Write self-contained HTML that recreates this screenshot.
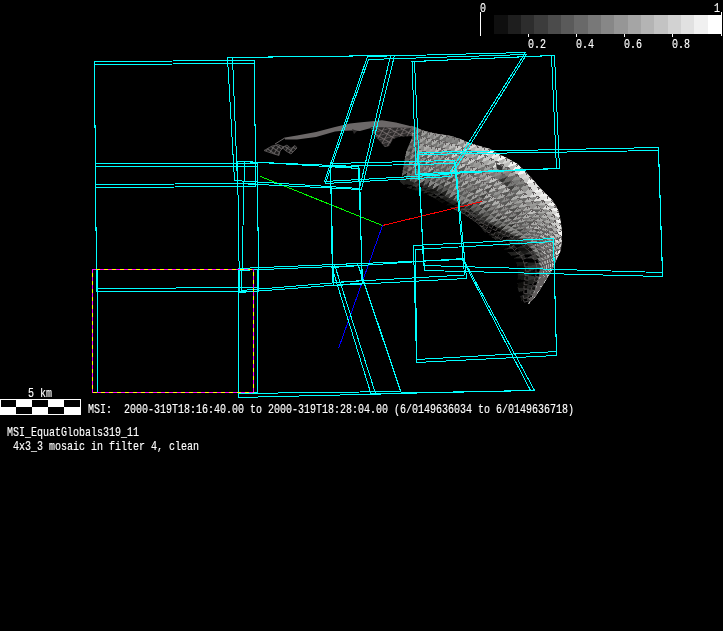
<!DOCTYPE html>
<html><head><meta charset="utf-8"><title>MSI_EquatGlobals319_11</title>
<style>
html,body{margin:0;padding:0;background:#000;}
body{width:723px;height:631px;overflow:hidden;position:relative;font-family:"Liberation Mono",monospace;}
svg{position:absolute;left:0;top:0;}
text{font-family:"Liberation Mono",monospace;fill:#fff;stroke:#fff;stroke-width:0.15px;}
</style></head><body>
<svg width="723" height="631" viewBox="0 0 723 631">
<rect width="723" height="631" fill="#000"/>

<defs>
<clipPath id="cpBody"><path d="M411,125.5 L425,131 L437.5,133.75 L450,135.6 L460,138.75 L470,143 L480,146 L490,148.75 L496,152.5 L507,158 L517.5,163.75 L530,176 L541,189 L550,197.5 L555,203.75 L558.75,211 L560.6,220 L562,231 L562,240 L561,250 L560,252.5 L556,261 L552.5,270 L547.5,277.5 L542.5,286 L537.5,293.75 L532.5,300 L528.75,303.75 L528.75,303.75 L521.7,301.7 L517.5,287 L518,268 L515,259 L506,251 L496,240 L485,232.5 L477.5,223.5 L465,215 L455,210 L445,205 L432.5,197 L420,192 L407.5,188 L400,182 L400,166 L406,152 L412,138 Z"/></clipPath>
<pattern id="wire" width="6" height="6" patternUnits="userSpaceOnUse" patternTransform="rotate(30)">
<path d="M0,0.5 L6,0.5 M0.5,0 L0.5,6 M0,6 L6,0" stroke="#777070" stroke-width="0.8" fill="none"/>
</pattern>
<pattern id="wire3" width="4" height="4" patternUnits="userSpaceOnUse" patternTransform="rotate(35)">
<path d="M0,0.5 L4,0.5 M0.5,0 L0.5,4" stroke="#6a6666" stroke-width="0.9" fill="none"/>
</pattern>
</defs>
<g id="asteroid">
<!-- detached wire bits -->
<path d="M264,150.5 L272,146 L278,144.5 L284,147 L280,151 L279,155.5 L274,154 L268,152 Z M282,147.5 L287,145 L291,148.5 L295,145.5 L297,148 L291,154 L286,151 Z" fill="#1c1b1b"/>
<path d="M264,150.5 L272,146 L278,144.5 L284,147 L280,151 L279,155.5 L274,154 L268,152 Z M282,147.5 L287,145 L291,148.5 L295,145.5 L297,148 L291,154 L286,151 Z" fill="url(#wire3)" stroke="#6a6666" stroke-width="0.7"/>
<!-- thin strip -->
<path d="M275,144 L285,137.8" stroke="#6a6666" stroke-width="1" fill="none"/>
<path d="M285,137.5 L297,135.5 L316,132 L335,127 L350,123.5 L359,122.4 L382,120.2 L396,122.4 L410,126 L418,128 L416,136 L400,132 L385,129 L371,128 L360,131 L352,130.5 L340,131 L335,131.5 L316,137 L297,139.5 L285,139.5 Z" fill="#6c6868"/>
<path d="M352,129 L354,134 L357,131 Z M370,127 L376,137 L385,147 L389,146 L393,139 L400,136.5 L412,136 L419,133 L418,128 Z" fill="#2c2a2a"/>
<path d="M370,127 L376,137 L385,147 L389,146 L393,139 L400,136.5 L412,136 L419,133 L418,128 Z" fill="url(#wire)"/>
<!-- main body -->
<g clip-path="url(#cpBody)">
<rect x="395" y="115" width="175" height="195" fill="#000"/>
<g shape-rendering="crispEdges">
<path fill="rgb(0,0,0)" stroke="rgb(0,0,0)" stroke-width="0.4" d="M408.4,184.2 406.8,187.4 403.4,184.7ZM408.4,184.2 412.7,185.8 406.8,187.4ZM412.7,185.8 417.0,187.2 410.8,189.1ZM423.5,185.6 421.3,188.6 417.0,187.2ZM425.6,190.3 423.2,193.3 419.1,191.7ZM429.8,191.9 427.2,194.9 423.2,193.3ZM434.0,193.7 437.9,196.0 431.2,196.5ZM440.8,193.4 444.9,195.8 437.9,196.0ZM437.9,196.0 441.8,198.4 435.0,198.6ZM441.8,198.4 445.7,200.7 438.7,201.0ZM445.7,200.7 449.7,202.8 442.4,203.3ZM449.7,202.8 446.1,205.5 442.4,203.3ZM453.7,204.9 450.0,207.5 446.1,205.5ZM457.5,202.3 461.7,204.5 453.7,204.9ZM453.7,204.9 457.8,207.0 450.0,207.5ZM465.9,211.2 469.6,213.7 461.7,213.3ZM473.3,216.3 477.0,219.0 469.1,217.8ZM484.3,224.3 479.4,225.7 476.3,222.7ZM493.3,225.3 497.5,227.6 487.7,227.2ZM497.5,227.6 491.2,230.0 487.7,227.2ZM487.7,227.2 491.2,230.0 482.2,229.1ZM501.7,229.8 495.1,232.3 491.2,230.0ZM491.2,230.0 495.1,232.3 484.9,232.4ZM495.1,232.3 488.5,234.9 484.9,232.4ZM499.0,234.6 503.0,236.8 492.1,237.4ZM514.6,235.8 506.6,239.4 503.0,236.8ZM503.0,236.8 506.6,239.4 495.7,239.8ZM506.6,239.4 510.1,242.3 498.7,243.0ZM510.1,242.3 501.6,246.2 498.7,243.0ZM513.6,245.2 504.6,249.4 501.6,246.2ZM526.3,243.8 517.0,248.1 513.6,245.2ZM517.0,248.1 507.7,252.5 504.6,249.4ZM517.0,248.1 520.3,251.3 507.7,252.5ZM523.6,254.4 514.2,258.3 510.9,255.4ZM535.7,254.3 525.8,258.2 523.6,254.4ZM525.8,258.2 516.0,262.1 514.2,258.3ZM537.3,258.8 527.4,262.5 525.8,258.2ZM525.8,258.2 527.4,262.5 516.0,262.1ZM537.3,258.8 539.0,263.2 527.4,262.5ZM528.4,266.8 517.9,270.5 517.4,266.2ZM539.8,267.8 539.3,272.5 528.8,271.3ZM539.3,272.5 538.8,277.2 528.5,275.8ZM528.2,280.3 517.6,283.5 517.7,279.2ZM537.4,281.7 535.9,286.2 527.6,284.8ZM527.4,289.1 527.3,293.5 518.9,292.0ZM527.3,293.5 520.1,296.2 518.9,292.0ZM532.9,295.2 530.8,299.5 527.1,297.8ZM527.1,297.8 527.7,301.0 521.3,300.4ZM527.7,301.0 524.6,302.5 521.3,300.4ZM527.7,301.0 528.8,303.8 524.6,302.5ZM528.8,303.8 528.8,303.8 524.6,302.5Z"/>
<path fill="rgb(13,13,11)" stroke="rgb(13,13,11)" stroke-width="0.4" d="M407.4,172.2 406.0,178.5 402.0,176.0ZM421.3,188.6 419.1,191.7 414.9,190.4ZM429.8,191.9 434.0,193.7 427.2,194.9ZM441.8,198.4 438.7,201.0 435.0,198.6ZM445.7,200.7 442.4,203.3 438.7,201.0ZM449.7,202.8 453.7,204.9 446.1,205.5ZM480.7,221.6 476.3,222.7 472.7,220.2ZM484.3,224.3 487.7,227.2 479.4,225.7ZM499.0,234.6 492.1,237.4 488.5,234.9ZM506.6,239.4 498.7,243.0 495.7,239.8ZM527.4,262.5 528.4,266.8 517.4,266.2ZM528.4,266.8 528.8,271.3 517.9,270.5ZM528.8,271.3 517.8,274.8 517.9,270.5ZM528.2,280.3 527.6,284.8 517.6,283.5ZM527.6,284.8 517.7,287.8 517.6,283.5ZM527.6,284.8 527.4,289.1 517.7,287.8Z"/>
<path fill="rgb(18,18,16)" stroke="rgb(18,18,16)" stroke-width="0.4" d="M428.0,187.3 425.6,190.3 421.3,188.6ZM432.4,189.0 429.8,191.9 425.6,190.3ZM432.4,189.0 436.7,191.0 429.8,191.9ZM465.9,206.8 461.8,209.1 457.8,207.0ZM470.0,209.0 473.8,212.0 465.9,211.2ZM493.3,225.3 487.7,227.2 484.3,224.3ZM497.5,227.6 501.7,229.8 491.2,230.0ZM501.7,229.8 506.0,231.8 495.1,232.3ZM518.6,238.3 522.6,240.9 510.1,242.3ZM529.7,247.2 520.3,251.3 517.0,248.1ZM529.7,247.2 533.0,250.5 520.3,251.3ZM535.9,286.2 534.4,290.7 527.4,289.1Z"/>
<path fill="rgb(20,20,18)" stroke="rgb(20,20,18)" stroke-width="0.4" d="M417.0,187.2 414.9,190.4 410.8,189.1ZM457.8,207.0 461.8,209.1 453.9,209.4ZM469.6,213.7 465.5,215.3 461.7,213.3ZM495.1,232.3 499.0,234.6 488.5,234.9ZM510.1,242.3 513.6,245.2 501.6,246.2ZM527.4,262.5 517.4,266.2 516.0,262.1ZM528.5,275.8 517.7,279.2 517.8,274.8ZM528.5,275.8 528.2,280.3 517.7,279.2ZM527.1,297.8 521.3,300.4 520.1,296.2Z"/>
<path fill="rgb(26,26,24)" stroke="rgb(26,26,24)" stroke-width="0.4" d="M406.0,178.5 410.1,181.0 404.7,181.6ZM419.1,184.0 423.5,185.6 417.0,187.2ZM436.7,191.0 440.8,193.4 434.0,193.7ZM449.0,198.0 445.7,200.7 441.8,198.4ZM453.3,200.1 449.7,202.8 445.7,200.7ZM473.8,212.0 477.5,214.9 469.6,213.7ZM489.2,222.9 484.3,224.3 480.7,221.6ZM489.2,222.9 493.3,225.3 484.3,224.3ZM506.0,231.8 510.3,233.8 499.0,234.6ZM510.3,233.8 503.0,236.8 499.0,234.6ZM533.0,250.5 523.6,254.4 520.3,251.3ZM539.3,272.5 528.5,275.8 528.8,271.3Z"/>
<path fill="rgb(30,30,28)" stroke="rgb(30,30,28)" stroke-width="0.4" d="M439.6,184.4 436.7,191.0 432.4,189.0ZM448.2,189.2 444.9,195.8 440.8,193.4Z"/>
<path fill="rgb(31,31,29)" stroke="rgb(31,31,29)" stroke-width="0.4" d="M404.7,181.6 408.4,184.2 403.4,184.7ZM412.7,185.8 410.8,189.1 406.8,187.4ZM417.0,187.2 421.3,188.6 414.9,190.4ZM473.3,216.3 469.1,217.8 465.5,215.3ZM477.0,219.0 472.7,220.2 469.1,217.8ZM477.0,219.0 480.7,221.6 472.7,220.2ZM487.7,227.2 482.2,229.1 479.4,225.7ZM491.2,230.0 484.9,232.4 482.2,229.1ZM520.3,251.3 510.9,255.4 507.7,252.5ZM527.3,293.5 527.1,297.8 520.1,296.2Z"/>
<path fill="rgb(33,33,31)" stroke="rgb(33,33,31)" stroke-width="0.4" d="M402.0,176.0 406.0,178.5 401.0,179.0ZM406.0,178.5 404.7,181.6 401.0,179.0ZM410.1,181.0 408.4,184.2 404.7,181.6ZM410.1,181.0 414.6,182.5 408.4,184.2ZM414.6,182.5 412.7,185.8 408.4,184.2ZM436.7,191.0 434.0,193.7 429.8,191.9ZM444.9,195.8 449.0,198.0 441.8,198.4ZM457.5,202.3 453.7,204.9 449.7,202.8ZM461.7,204.5 457.8,207.0 453.7,204.9ZM481.2,217.8 477.0,219.0 473.3,216.3ZM485.1,220.6 480.7,221.6 477.0,219.0ZM506.0,231.8 499.0,234.6 495.1,232.3ZM514.6,235.8 518.6,238.3 506.6,239.4ZM522.6,240.9 513.6,245.2 510.1,242.3ZM526.3,243.8 529.7,247.2 517.0,248.1ZM539.0,263.2 528.4,266.8 527.4,262.5ZM538.8,277.2 537.4,281.7 528.2,280.3ZM537.4,281.7 527.6,284.8 528.2,280.3Z"/>
<path fill="rgb(34,34,32)" stroke="rgb(34,34,32)" stroke-width="0.4" d="M411.6,174.7 410.1,181.0 406.0,178.5Z"/>
<path fill="rgb(35,35,33)" stroke="rgb(35,35,33)" stroke-width="0.4" d="M421.1,177.7 419.1,184.0 414.6,182.5ZM507.0,225.0 501.7,229.8 497.5,227.6Z"/>
<path fill="rgb(36,36,34)" stroke="rgb(36,36,34)" stroke-width="0.4" d="M425.8,179.2 423.5,185.6 419.1,184.0Z"/>
<path fill="rgb(37,37,35)" stroke="rgb(37,37,35)" stroke-width="0.4" d="M430.4,180.8 428.0,187.3 423.5,185.6ZM540.3,257.6 537.3,258.8 535.7,254.3Z"/>
<path fill="rgb(38,38,36)" stroke="rgb(38,38,36)" stroke-width="0.4" d="M401.0,179.0 404.7,181.6 400.0,182.0ZM404.7,181.6 403.4,184.7 400.0,182.0ZM421.3,188.6 425.6,190.3 419.1,191.7ZM425.6,190.3 429.8,191.9 423.2,193.3ZM434.0,193.7 431.2,196.5 427.2,194.9ZM437.9,196.0 435.0,198.6 431.2,196.5ZM457.8,207.0 453.9,209.4 450.0,207.5ZM461.8,209.1 457.8,211.4 453.9,209.4ZM474.6,202.6 470.0,209.0 465.9,206.8ZM461.8,209.1 465.9,211.2 457.8,211.4ZM465.9,211.2 461.7,213.3 457.8,211.4ZM469.6,213.7 473.3,216.3 465.5,215.3ZM480.7,221.6 484.3,224.3 476.3,222.7ZM503.0,236.8 495.7,239.8 492.1,237.4ZM513.6,245.2 517.0,248.1 504.6,249.4ZM520.3,251.3 523.6,254.4 510.9,255.4ZM523.6,254.4 525.8,258.2 514.2,258.3ZM528.8,271.3 528.5,275.8 517.8,274.8ZM527.4,289.1 518.9,292.0 517.7,287.8Z"/>
<path fill="rgb(40,40,38)" stroke="rgb(40,40,38)" stroke-width="0.4" d="M410.1,159.5 408.7,165.8 404.2,163.4Z"/>
<path fill="rgb(41,41,39)" stroke="rgb(41,41,39)" stroke-width="0.4" d="M423.5,185.6 428.0,187.3 421.3,188.6ZM428.0,187.3 432.4,189.0 425.6,190.3ZM449.0,198.0 453.3,200.1 445.7,200.7ZM453.3,200.1 457.5,202.3 449.7,202.8ZM477.5,214.9 481.2,217.8 473.3,216.3ZM485.1,220.6 489.2,222.9 480.7,221.6ZM510.3,233.8 514.6,235.8 503.0,236.8ZM523.6,235.0 518.6,238.3 514.6,235.8ZM518.6,238.3 510.1,242.3 506.6,239.4ZM522.6,240.9 526.3,243.8 513.6,245.2ZM535.9,286.2 527.4,289.1 527.6,284.8ZM532.9,295.2 527.1,297.8 527.3,293.5ZM530.8,299.5 528.8,303.8 527.7,301.0Z"/>
<path fill="rgb(45,45,43)" stroke="rgb(45,45,43)" stroke-width="0.4" d="M528.8,303.8 528.8,303.8 530.8,299.5Z"/>
<path fill="rgb(47,47,45)" stroke="rgb(47,47,45)" stroke-width="0.4" d="M457.1,193.5 453.3,200.1 449.0,198.0ZM527.3,238.1 522.6,240.9 518.6,238.3ZM541.8,266.9 539.8,267.8 539.0,263.2Z"/>
<path fill="rgb(49,49,47)" stroke="rgb(49,49,47)" stroke-width="0.4" d="M443.9,186.8 440.8,193.4 436.7,191.0Z"/>
<path fill="rgb(50,50,48)" stroke="rgb(50,50,48)" stroke-width="0.4" d="M435.1,182.5 432.4,189.0 428.0,187.3ZM490.3,214.6 485.1,220.6 481.2,217.8Z"/>
<path fill="rgb(51,51,49)" stroke="rgb(51,51,49)" stroke-width="0.4" d="M414.6,182.5 419.1,184.0 412.7,185.8ZM440.8,193.4 437.9,196.0 434.0,193.7ZM444.9,195.8 441.8,198.4 437.9,196.0ZM465.9,206.8 470.0,209.0 461.8,209.1ZM533.0,250.5 535.7,254.3 523.6,254.4ZM539.0,263.2 539.8,267.8 528.4,266.8ZM539.8,267.8 528.8,271.3 528.4,266.8ZM538.8,277.2 528.2,280.3 528.5,275.8ZM534.4,290.7 532.9,295.2 527.3,293.5ZM530.8,299.5 527.7,301.0 527.1,297.8Z"/>
<path fill="rgb(52,52,50)" stroke="rgb(52,52,50)" stroke-width="0.4" d="M507.7,176.7 502.7,183.1 497.8,180.0ZM516.6,222.9 511.3,227.3 507.0,225.0ZM541.4,262.2 539.0,263.2 537.3,258.8Z"/>
<path fill="rgb(53,53,51)" stroke="rgb(53,53,51)" stroke-width="0.4" d="M470.3,200.3 465.9,206.8 461.7,204.5ZM486.4,211.7 481.2,217.8 477.5,214.9Z"/>
<path fill="rgb(54,54,52)" stroke="rgb(54,54,52)" stroke-width="0.4" d="M537.7,243.0 533.7,245.1 530.7,241.4Z"/>
<path fill="rgb(55,55,53)" stroke="rgb(55,55,53)" stroke-width="0.4" d="M482.5,208.5 477.5,214.9 473.8,212.0Z"/>
<path fill="rgb(56,56,54)" stroke="rgb(56,56,54)" stroke-width="0.4" d="M487.6,202.2 482.5,208.5 478.6,205.6ZM512.0,180.8 506.9,187.0 502.7,183.1ZM540.3,276.6 538.8,277.2 539.3,272.5Z"/>
<path fill="rgb(57,57,55)" stroke="rgb(57,57,55)" stroke-width="0.4" d="M525.0,228.4 519.8,232.1 515.6,229.7Z"/>
<path fill="rgb(58,58,56)" stroke="rgb(58,58,56)" stroke-width="0.4" d="M452.6,191.4 449.0,198.0 444.9,195.8ZM508.0,217.5 502.7,222.5 498.6,219.9ZM541.8,276.1 540.3,276.6 541.1,271.8ZM535.2,290.5 534.4,290.7 535.9,286.2Z"/>
<path fill="rgb(59,59,57)" stroke="rgb(59,59,57)" stroke-width="0.4" d="M408.7,165.8 407.4,172.2 403.1,169.7ZM428.0,172.8 425.8,179.2 421.1,177.7ZM503.8,214.5 498.6,219.9 494.5,217.2ZM538.6,281.3 537.4,281.7 538.8,277.2ZM537.9,285.5 536.9,285.9 538.6,281.3Z"/>
<path fill="rgb(60,60,58)" stroke="rgb(60,60,58)" stroke-width="0.4" d="M413.2,168.3 411.6,174.7 407.4,172.2ZM447.0,180.3 443.9,186.8 439.6,184.4ZM498.6,219.9 493.3,225.3 489.2,222.9Z"/>
<path fill="rgb(61,61,59)" stroke="rgb(61,61,59)" stroke-width="0.4" d="M419.9,163.5 418.1,169.9 413.2,168.3ZM419.1,184.0 417.0,187.2 412.7,185.8ZM461.7,204.5 465.9,206.8 457.8,207.0ZM470.0,209.0 465.9,211.2 461.8,209.1ZM473.8,212.0 469.6,213.7 465.9,211.2ZM477.5,214.9 473.3,216.3 469.6,213.7ZM481.2,217.8 485.1,220.6 477.0,219.0ZM535.7,254.3 537.3,258.8 525.8,258.2ZM534.4,290.7 527.3,293.5 527.4,289.1ZM528.8,303.8 528.8,303.8 527.7,301.0Z"/>
<path fill="rgb(62,62,60)" stroke="rgb(62,62,60)" stroke-width="0.4" d="M418.0,149.2 416.4,155.6 411.5,153.2ZM491.5,205.5 486.4,211.7 482.5,208.5Z"/>
<path fill="rgb(63,63,61)" stroke="rgb(63,63,61)" stroke-width="0.4" d="M502.7,222.5 497.5,227.6 493.3,225.3Z"/>
<path fill="rgb(64,64,62)" stroke="rgb(64,64,62)" stroke-width="0.4" d="M516.4,184.8 511.2,190.8 506.9,187.0ZM542.2,251.6 538.9,252.9 536.6,248.8Z"/>
<path fill="rgb(65,65,63)" stroke="rgb(65,65,63)" stroke-width="0.4" d="M412.8,146.8 411.5,153.2 406.5,150.8ZM454.9,176.2 451.6,182.7 447.0,180.3Z"/>
<path fill="rgb(66,66,64)" stroke="rgb(66,66,64)" stroke-width="0.4" d="M445.4,171.4 442.5,177.9 437.7,175.9Z"/>
<path fill="rgb(67,67,65)" stroke="rgb(67,67,65)" stroke-width="0.4" d="M530.7,241.4 526.3,243.8 522.6,240.9Z"/>
<path fill="rgb(68,68,66)" stroke="rgb(68,68,66)" stroke-width="0.4" d="M450.1,173.8 447.0,180.3 442.5,177.9ZM488.2,192.8 483.4,199.2 479.2,196.2ZM517.5,215.5 512.2,220.3 508.0,217.5ZM538.9,285.2 537.9,285.5 539.8,280.8Z"/>
<path fill="rgb(69,69,67)" stroke="rgb(69,69,67)" stroke-width="0.4" d="M515.6,229.7 510.3,233.8 506.0,231.8ZM533.7,245.1 529.7,247.2 526.3,243.8ZM536.6,248.8 533.0,250.5 529.7,247.2ZM543.2,256.5 540.3,257.6 538.9,252.9Z"/>
<path fill="rgb(70,70,68)" stroke="rgb(70,70,68)" stroke-width="0.4" d="M414.8,161.9 413.2,168.3 408.7,165.8ZM461.6,195.6 457.5,202.3 453.3,200.1ZM540.3,247.1 536.6,248.8 533.7,245.1ZM543.8,266.1 541.8,266.9 541.4,262.2ZM536.9,285.9 535.9,286.2 537.4,281.7Z"/>
<path fill="rgb(71,71,69)" stroke="rgb(71,71,69)" stroke-width="0.4" d="M411.5,153.2 410.1,159.5 405.4,157.1ZM435.3,167.8 432.9,174.3 428.0,172.8ZM494.5,217.2 489.2,222.9 485.1,220.6ZM511.3,227.3 506.0,231.8 501.7,229.8Z"/>
<path fill="rgb(72,72,70)" stroke="rgb(72,72,70)" stroke-width="0.4" d="M451.6,182.7 448.2,189.2 443.9,186.8Z"/>
<path fill="rgb(73,73,71)" stroke="rgb(73,73,71)" stroke-width="0.4" d="M416.4,155.6 414.8,161.9 410.1,159.5ZM416.3,176.2 414.6,182.5 410.1,181.0ZM483.4,199.2 478.6,205.6 474.6,202.6Z"/>
<path fill="rgb(74,74,72)" stroke="rgb(74,74,72)" stroke-width="0.4" d="M538.9,252.9 535.7,254.3 533.0,250.5ZM528.8,303.8 528.8,303.8 531.4,299.4Z"/>
<path fill="rgb(75,75,73)" stroke="rgb(75,75,73)" stroke-width="0.4" d="M437.7,175.9 435.1,182.5 430.4,180.8ZM458.3,169.6 454.9,176.2 450.1,173.8ZM463.4,171.7 459.8,178.3 454.9,176.2ZM479.2,196.2 474.6,202.6 470.3,200.3ZM493.0,186.4 488.2,192.8 483.8,189.8ZM478.6,205.6 473.8,212.0 470.0,209.0ZM534.0,295.0 533.4,295.1 535.2,290.5Z"/>
<path fill="rgb(76,76,74)" stroke="rgb(76,76,74)" stroke-width="0.4" d="M495.5,208.7 490.3,214.6 486.4,211.7Z"/>
<path fill="rgb(77,77,75)" stroke="rgb(77,77,75)" stroke-width="0.4" d="M422.8,130.1 421.2,136.5 415.6,134.2ZM427.1,158.6 425.1,165.0 419.9,163.5ZM479.0,187.4 474.7,193.8 470.1,191.4ZM499.7,211.6 494.5,217.2 490.3,214.6ZM520.9,225.6 515.6,229.7 511.3,227.3Z"/>
<path fill="rgb(78,78,76)" stroke="rgb(78,78,76)" stroke-width="0.4" d="M416.9,127.8 415.6,134.2 409.9,131.8ZM465.9,198.0 461.7,204.5 457.5,202.3ZM505.0,205.9 499.7,211.6 495.5,208.7ZM522.8,210.8 517.5,215.5 513.2,212.4ZM512.2,220.3 507.0,225.0 502.7,222.5ZM519.8,232.1 514.6,235.8 510.3,233.8ZM541.8,240.9 537.7,243.0 535.0,238.9Z"/>
<path fill="rgb(79,79,77)" stroke="rgb(79,79,77)" stroke-width="0.4" d="M474.7,193.8 470.3,200.3 465.9,198.0ZM536.0,290.3 535.2,290.5 536.9,285.9Z"/>
<path fill="rgb(80,80,78)" stroke="rgb(80,80,78)" stroke-width="0.4" d="M442.5,177.9 439.6,184.4 435.1,182.5ZM518.5,207.4 513.2,212.4 509.1,209.2ZM541.4,229.5 536.7,232.3 533.7,228.4ZM542.9,271.1 541.1,271.8 541.8,266.9ZM539.8,280.8 538.6,281.3 540.3,276.6Z"/>
<path fill="rgb(81,81,79)" stroke="rgb(81,81,79)" stroke-width="0.4" d="M541.1,271.8 539.3,272.5 539.8,267.8Z"/>
<path fill="rgb(82,82,80)" stroke="rgb(82,82,80)" stroke-width="0.4" d="M415.6,134.2 414.2,140.5 408.8,138.1ZM423.1,171.3 421.1,177.7 416.3,176.2ZM536.7,290.0 536.0,290.3 537.9,285.5ZM531.1,299.4 530.8,299.5 532.9,295.2Z"/>
<path fill="rgb(83,83,81)" stroke="rgb(83,83,81)" stroke-width="0.4" d="M432.5,160.0 430.2,166.4 425.1,165.0ZM528.7,231.7 523.6,235.0 519.8,232.1Z"/>
<path fill="rgb(84,84,82)" stroke="rgb(84,84,82)" stroke-width="0.4" d="M414.2,140.5 412.8,146.8 407.6,144.4ZM404.2,163.4 408.7,165.8 403.1,169.7Z"/>
<path fill="rgb(85,85,83)" stroke="rgb(85,85,83)" stroke-width="0.4" d="M432.9,174.3 430.4,180.8 425.8,179.2ZM469.7,182.2 465.6,188.9 460.9,186.9ZM535.4,220.9 530.2,224.7 526.2,221.4ZM542.3,279.9 541.1,280.3 543.2,275.5Z"/>
<path fill="rgb(86,86,84)" stroke="rgb(86,86,84)" stroke-width="0.4" d="M465.6,188.9 461.6,195.6 457.1,193.5ZM514.3,203.8 509.1,209.2 505.0,205.9ZM526.2,221.4 520.9,225.6 516.6,222.9ZM532.0,235.2 527.3,238.1 523.6,235.0ZM545.8,238.9 541.8,240.9 539.4,236.5ZM528.8,303.8 528.8,303.8 531.1,299.4Z"/>
<path fill="rgb(87,87,85)" stroke="rgb(87,87,85)" stroke-width="0.4" d="M419.6,142.9 418.0,149.2 412.8,146.8ZM445.8,156.4 443.1,162.9 437.8,161.3ZM464.7,180.2 460.9,186.9 456.2,184.8ZM511.2,190.8 506.0,196.8 501.8,193.1ZM513.2,212.4 508.0,217.5 503.8,214.5Z"/>
<path fill="rgb(88,88,86)" stroke="rgb(88,88,86)" stroke-width="0.4" d="M443.9,186.8 448.2,189.2 440.8,193.4ZM467.0,165.1 463.4,171.7 458.3,169.6ZM456.2,184.8 452.6,191.4 448.2,189.2ZM521.9,218.4 516.6,222.9 512.2,220.3ZM549.2,254.2 546.2,255.3 545.4,250.2Z"/>
<path fill="rgb(89,89,87)" stroke="rgb(89,89,87)" stroke-width="0.4" d="M459.8,178.3 456.2,184.8 451.6,182.7ZM477.8,168.8 473.7,175.5 468.6,173.6ZM510.2,200.2 505.0,205.9 500.7,202.7ZM541.1,280.3 539.8,280.8 541.8,276.1Z"/>
<path fill="rgb(90,90,88)" stroke="rgb(90,90,88)" stroke-width="0.4" d="M429.1,152.3 427.1,158.6 421.7,157.2ZM535.0,238.9 530.7,241.4 527.3,238.1ZM527.3,238.1 530.7,241.4 522.6,240.9ZM534.5,294.8 534.0,295.0 536.0,290.3ZM533.4,295.1 532.9,295.2 534.4,290.7Z"/>
<path fill="rgb(91,91,89)" stroke="rgb(91,91,89)" stroke-width="0.4" d="M405.4,157.1 410.1,159.5 404.2,163.4ZM439.6,184.4 443.9,186.8 436.7,191.0ZM470.1,191.4 465.9,198.0 461.6,195.6ZM492.6,195.8 487.6,202.2 483.4,199.2ZM515.5,194.5 510.2,200.2 506.0,196.8ZM546.2,255.3 543.2,256.5 542.2,251.6ZM532.0,299.3 531.7,299.4 534.5,294.8Z"/>
<path fill="rgb(92,92,90)" stroke="rgb(92,92,90)" stroke-width="0.4" d="M496.6,199.3 491.5,205.5 487.6,202.2ZM545.8,265.3 543.8,266.1 543.9,261.3Z"/>
<path fill="rgb(93,93,91)" stroke="rgb(93,93,91)" stroke-width="0.4" d="M448.3,164.8 445.4,171.4 440.4,169.4ZM509.1,209.2 503.8,214.5 499.7,211.6Z"/>
<path fill="rgb(94,94,92)" stroke="rgb(94,94,92)" stroke-width="0.4" d="M530.7,241.4 533.7,245.1 526.3,243.8ZM546.3,260.3 543.9,261.3 543.2,256.5ZM543.5,279.4 542.3,279.9 544.7,275.0Z"/>
<path fill="rgb(95,95,93)" stroke="rgb(95,95,93)" stroke-width="0.4" d="M403.1,169.7 407.4,172.2 402.0,176.0ZM478.5,178.3 474.3,184.9 469.7,182.2ZM486.4,211.7 490.3,214.6 481.2,217.8ZM540.9,284.5 539.9,284.9 542.3,279.9ZM531.4,299.4 531.1,299.4 533.4,295.1Z"/>
<path fill="rgb(96,96,94)" stroke="rgb(96,96,94)" stroke-width="0.4" d="M506.0,196.8 500.7,202.7 496.6,199.3ZM547.5,243.7 543.9,245.4 541.8,240.9Z"/>
<path fill="rgb(97,97,95)" stroke="rgb(97,97,95)" stroke-width="0.4" d="M497.8,180.0 493.0,186.4 488.4,183.4Z"/>
<path fill="rgb(98,98,96)" stroke="rgb(98,98,96)" stroke-width="0.4" d="M418.1,169.9 416.3,176.2 411.6,174.7ZM441.4,134.3 439.2,140.7 433.1,139.6ZM443.1,162.9 440.4,169.4 435.3,167.8ZM527.2,213.9 521.9,218.4 517.5,215.5ZM542.1,209.1 536.8,213.2 532.6,209.5ZM543.9,245.4 540.3,247.1 537.7,243.0Z"/>
<path fill="rgb(99,99,97)" stroke="rgb(99,99,97)" stroke-width="0.4" d="M460.9,186.9 457.1,193.5 452.6,191.4ZM526.0,183.2 520.7,188.8 516.4,184.8ZM536.7,232.3 532.0,235.2 528.7,231.7ZM548.1,231.6 543.7,234.1 541.4,229.5ZM543.7,234.1 539.4,236.5 536.7,232.3Z"/>
<path fill="rgb(100,100,98)" stroke="rgb(100,100,98)" stroke-width="0.4" d="M434.7,153.5 432.5,160.0 427.1,158.6ZM456.4,160.8 453.2,167.3 448.3,164.8ZM478.6,205.6 482.5,208.5 473.8,212.0ZM549.8,236.8 545.8,238.9 543.7,234.1ZM543.9,261.3 541.4,262.2 540.3,257.6ZM537.5,289.8 536.7,290.0 538.9,285.2Z"/>
<path fill="rgb(101,101,99)" stroke="rgb(101,101,99)" stroke-width="0.4" d="M440.4,169.4 437.7,175.9 432.9,174.3ZM520.7,188.8 515.5,194.5 511.2,190.8ZM546.2,274.4 544.7,275.0 546.5,269.8Z"/>
<path fill="rgb(102,102,100)" stroke="rgb(102,102,100)" stroke-width="0.4" d="M437.8,161.3 435.3,167.8 430.2,166.4ZM425.8,179.2 430.4,180.8 423.5,185.6ZM483.4,180.9 479.0,187.4 474.3,184.9ZM551.1,242.0 547.5,243.7 545.8,238.9ZM546.5,269.8 544.7,270.5 545.8,265.3Z"/>
<path fill="rgb(103,103,101)" stroke="rgb(103,103,101)" stroke-width="0.4" d="M411.0,125.5 416.9,127.8 409.9,131.8ZM453.2,167.3 450.1,173.8 445.4,171.4ZM474.6,202.6 478.6,205.6 470.0,209.0ZM544.7,275.0 543.2,275.5 544.7,270.5Z"/>
<path fill="rgb(104,104,102)" stroke="rgb(104,104,102)" stroke-width="0.4" d="M425.1,165.0 423.1,171.3 418.1,169.9ZM488.4,183.4 483.8,189.8 479.0,187.4ZM529.0,197.3 523.7,202.3 519.6,198.4ZM545.4,250.2 542.2,251.6 540.3,247.1ZM549.9,263.7 547.9,264.5 548.8,259.3ZM541.8,266.9 541.1,271.8 539.8,267.8ZM535.0,294.7 534.5,294.8 536.7,290.0Z"/>
<path fill="rgb(105,105,103)" stroke="rgb(105,105,103)" stroke-width="0.4" d="M442.7,148.3 440.3,154.8 434.7,153.5ZM474.3,184.9 470.1,191.4 465.6,188.9ZM502.6,173.6 507.7,176.7 497.8,180.0ZM507.7,176.7 512.0,180.8 502.7,183.1ZM540.6,217.2 535.4,220.9 531.5,217.3ZM548.7,248.8 545.4,250.2 543.9,245.4Z"/>
<path fill="rgb(106,106,104)" stroke="rgb(106,106,104)" stroke-width="0.4" d="M407.4,172.2 411.6,174.7 406.0,178.5ZM428.9,131.9 427.1,138.2 421.2,136.5ZM483.8,189.8 479.2,196.2 474.7,193.8ZM530.2,224.7 525.0,228.4 520.9,225.6ZM551.2,258.4 548.8,259.3 549.2,254.2Z"/>
<path fill="rgb(107,107,105)" stroke="rgb(107,107,105)" stroke-width="0.4" d="M430.2,166.4 428.0,172.8 423.1,171.3ZM517.2,174.6 512.0,180.8 507.7,176.7Z"/>
<path fill="rgb(108,108,106)" stroke="rgb(108,108,106)" stroke-width="0.4" d="M421.2,136.5 419.6,142.9 414.2,140.5ZM411.6,174.7 416.3,176.2 410.1,181.0ZM468.6,173.6 464.7,180.2 459.8,178.3ZM531.7,299.4 531.4,299.4 534.0,295.0Z"/>
<path fill="rgb(109,109,107)" stroke="rgb(109,109,107)" stroke-width="0.4" d="M416.3,176.2 421.1,177.7 414.6,182.5ZM498.6,219.9 502.7,222.5 493.3,225.3ZM547.9,264.5 545.8,265.3 546.3,260.3ZM543.2,275.5 541.8,276.1 542.9,271.1Z"/>
<path fill="rgb(110,110,108)" stroke="rgb(110,110,108)" stroke-width="0.4" d="M407.6,144.4 412.8,146.8 406.5,150.8ZM497.6,189.5 492.6,195.8 488.2,192.8ZM538.7,225.1 533.7,228.4 530.2,224.7ZM546.1,226.6 541.4,229.5 538.7,225.1ZM541.1,271.8 540.3,276.6 539.3,272.5Z"/>
<path fill="rgb(112,112,110)" stroke="rgb(112,112,110)" stroke-width="0.4" d="M447.7,135.3 445.2,141.8 439.2,140.7ZM482.7,171.8 478.5,178.3 473.7,175.5ZM552.4,229.2 548.1,231.6 546.1,226.6ZM542.0,284.2 540.9,284.5 543.5,279.4Z"/>
<path fill="rgb(113,113,111)" stroke="rgb(113,113,111)" stroke-width="0.4" d="M433.1,139.6 431.1,145.9 425.3,144.5ZM448.2,189.2 452.6,191.4 444.9,195.8ZM507.4,167.3 502.6,173.6 497.5,170.6ZM500.7,202.7 495.5,208.7 491.5,205.5ZM539.4,236.5 535.0,238.9 532.0,235.2ZM555.1,251.9 552.1,253.0 551.9,247.4ZM544.7,279.0 543.5,279.4 546.2,274.4Z"/>
<path fill="rgb(114,114,112)" stroke="rgb(114,114,112)" stroke-width="0.4" d="M525.0,228.4 528.7,231.7 519.8,232.1ZM553.7,257.4 551.2,258.4 552.1,253.0Z"/>
<path fill="rgb(115,115,113)" stroke="rgb(115,115,113)" stroke-width="0.4" d="M454.1,151.8 451.2,158.3 445.8,156.4ZM486.9,165.2 482.7,171.8 477.8,168.8ZM547.7,273.8 546.2,274.4 548.2,269.1Z"/>
<path fill="rgb(116,116,114)" stroke="rgb(116,116,114)" stroke-width="0.4" d="M440.3,154.8 437.8,161.3 432.5,160.0ZM482.5,208.5 486.4,211.7 477.5,214.9ZM524.8,193.1 519.6,198.4 515.5,194.5ZM533.7,228.4 528.7,231.7 525.0,228.4ZM554.8,240.3 551.1,242.0 549.8,236.8ZM555.2,246.1 551.9,247.4 551.1,242.0ZM540.3,257.6 541.4,262.2 537.3,258.8ZM544.7,270.5 542.9,271.1 543.8,266.1ZM539.1,289.4 538.3,289.6 540.9,284.5Z"/>
<path fill="rgb(117,117,115)" stroke="rgb(117,117,115)" stroke-width="0.4" d="M538.9,252.9 540.3,257.6 535.7,254.3ZM548.2,269.1 546.5,269.8 547.9,264.5Z"/>
<path fill="rgb(118,118,116)" stroke="rgb(118,118,116)" stroke-width="0.4" d="M421.7,157.2 419.9,163.5 414.8,161.9ZM501.8,193.1 496.6,199.3 492.6,195.8ZM521.6,178.9 516.4,184.8 512.0,180.8ZM528.1,206.0 522.8,210.8 518.5,207.4ZM502.7,222.5 507.0,225.0 497.5,227.6ZM531.5,217.3 526.2,221.4 521.9,218.4ZM551.9,247.4 548.7,248.8 547.5,243.7ZM536.1,294.5 535.5,294.6 538.3,289.6Z"/>
<path fill="rgb(119,119,117)" stroke="rgb(119,119,117)" stroke-width="0.4" d="M439.2,140.7 436.9,147.1 431.1,145.9ZM445.2,141.8 442.7,148.3 436.9,147.1ZM490.3,214.6 494.5,217.2 485.1,220.6Z"/>
<path fill="rgb(120,120,118)" stroke="rgb(120,120,118)" stroke-width="0.4" d="M427.1,138.2 425.3,144.5 419.6,142.9ZM487.8,174.4 483.4,180.9 478.5,178.3ZM497.5,170.6 492.9,177.0 487.8,174.4ZM502.6,173.6 497.8,180.0 492.9,177.0ZM502.7,183.1 497.6,189.5 493.0,186.4Z"/>
<path fill="rgb(121,121,119)" stroke="rgb(121,121,119)" stroke-width="0.4" d="M512.0,180.8 516.4,184.8 506.9,187.0ZM523.7,202.3 518.5,207.4 514.3,203.8Z"/>
<path fill="rgb(122,122,120)" stroke="rgb(122,122,120)" stroke-width="0.4" d="M473.7,175.5 469.7,182.2 464.7,180.2ZM470.3,200.3 474.6,202.6 465.9,206.8ZM532.6,209.5 527.2,213.9 522.8,210.8ZM535.5,294.6 535.0,294.7 537.5,289.8Z"/>
<path fill="rgb(123,123,121)" stroke="rgb(123,123,121)" stroke-width="0.4" d="M413.2,168.3 418.1,169.9 411.6,174.7ZM459.9,138.7 457.0,145.2 451.1,143.3ZM451.2,158.3 448.3,164.8 443.1,162.9ZM470.5,158.5 467.0,165.1 461.6,163.1ZM540.3,247.1 542.2,251.6 536.6,248.8Z"/>
<path fill="rgb(124,124,122)" stroke="rgb(124,124,122)" stroke-width="0.4" d="M406.5,150.8 411.5,153.2 405.4,157.1ZM418.1,169.9 423.1,171.3 416.3,176.2ZM453.8,136.8 451.1,143.3 445.2,141.8ZM536.8,213.2 531.5,217.3 527.2,213.9Z"/>
<path fill="rgb(125,125,123)" stroke="rgb(125,125,123)" stroke-width="0.4" d="M415.6,134.2 421.2,136.5 414.2,140.5ZM423.5,150.9 421.7,157.2 416.4,155.6ZM451.6,182.7 456.2,184.8 448.2,189.2ZM457.1,193.5 461.6,195.6 453.3,200.1ZM507.0,225.0 511.3,227.3 501.7,229.8ZM545.8,213.5 540.6,217.2 536.8,213.2ZM548.8,218.4 543.8,221.8 540.6,217.2ZM550.8,223.8 546.1,226.6 543.8,221.8Z"/>
<path fill="rgb(126,126,124)" stroke="rgb(126,126,124)" stroke-width="0.4" d="M464.9,156.6 461.6,163.1 456.4,160.8ZM465.6,188.9 470.1,191.4 461.6,195.6Z"/>
<path fill="rgb(127,127,125)" stroke="rgb(127,127,125)" stroke-width="0.4" d="M459.5,154.2 456.4,160.8 451.2,158.3ZM491.5,205.5 495.5,208.7 486.4,211.7ZM519.8,232.1 523.6,235.0 514.6,235.8ZM553.9,234.7 549.8,236.8 548.1,231.6ZM533.7,245.1 536.6,248.8 529.7,247.2ZM548.8,259.3 546.3,260.3 546.2,255.3ZM542.9,271.1 541.8,276.1 541.1,271.8ZM538.6,281.3 536.9,285.9 537.4,281.7ZM538.3,289.6 537.5,289.8 539.9,284.9ZM528.8,303.8 528.8,303.8 531.7,299.4Z"/>
<path fill="rgb(128,128,126)" stroke="rgb(128,128,126)" stroke-width="0.4" d="M408.7,165.8 413.2,168.3 407.4,172.2ZM419.9,163.5 425.1,165.0 418.1,169.9ZM461.6,163.1 458.3,169.6 453.2,167.3ZM512.7,170.4 507.7,176.7 502.6,173.6ZM519.6,198.4 514.3,203.8 510.2,200.2ZM520.9,225.6 525.0,228.4 515.6,229.7Z"/>
<path fill="rgb(129,129,127)" stroke="rgb(129,129,127)" stroke-width="0.4" d="M448.5,149.8 445.8,156.4 440.3,154.8ZM437.7,175.9 442.5,177.9 435.1,182.5ZM445.4,171.4 450.1,173.8 442.5,177.9ZM472.4,167.0 468.6,173.6 463.4,171.7ZM474.3,184.9 479.0,187.4 470.1,191.4ZM506.9,187.0 501.8,193.1 497.6,189.5Z"/>
<path fill="rgb(130,130,128)" stroke="rgb(130,130,128)" stroke-width="0.4" d="M442.5,177.9 447.0,180.3 439.6,184.4ZM485.9,155.4 481.8,162.1 476.2,160.3ZM461.6,195.6 465.9,198.0 457.5,202.3ZM492.9,177.0 488.4,183.4 483.4,180.9ZM479.2,196.2 483.4,199.2 474.6,202.6ZM521.6,178.9 526.0,183.2 516.4,184.8ZM531.1,299.4 528.8,303.8 530.8,299.5Z"/>
<path fill="rgb(131,131,129)" stroke="rgb(131,131,129)" stroke-width="0.4" d="M558.1,250.8 555.1,251.9 555.2,246.1ZM542.2,251.6 543.2,256.5 538.9,252.9ZM539.9,284.9 538.9,285.2 541.1,280.3Z"/>
<path fill="rgb(132,132,130)" stroke="rgb(132,132,130)" stroke-width="0.4" d="M416.9,127.8 422.8,130.1 415.6,134.2ZM435.1,133.2 433.1,139.6 427.1,138.2ZM447.7,135.3 453.8,136.8 445.2,141.8ZM430.4,180.8 435.1,182.5 428.0,187.3ZM513.2,212.4 517.5,215.5 508.0,217.5ZM552.1,253.0 549.2,254.2 548.7,248.8ZM528.8,303.8 528.8,303.8 532.0,299.3Z"/>
<path fill="rgb(133,133,131)" stroke="rgb(133,133,131)" stroke-width="0.4" d="M408.8,138.1 414.2,140.5 407.6,144.4ZM471.6,143.5 468.3,150.0 462.6,147.7ZM480.0,153.7 476.2,160.3 470.5,158.5ZM476.2,160.3 472.4,167.0 467.0,165.1ZM452.6,191.4 457.1,193.5 449.0,198.0Z"/>
<path fill="rgb(134,134,132)" stroke="rgb(134,134,132)" stroke-width="0.4" d="M414.2,140.5 419.6,142.9 412.8,146.8ZM412.8,146.8 418.0,149.2 411.5,153.2ZM428.0,172.8 432.9,174.3 425.8,179.2ZM468.3,150.0 464.9,156.6 459.5,154.2ZM496.6,161.5 492.2,167.9 486.9,165.2ZM515.6,229.7 519.8,232.1 510.3,233.8ZM543.8,221.8 538.7,225.1 535.4,220.9Z"/>
<path fill="rgb(135,135,133)" stroke="rgb(135,135,133)" stroke-width="0.4" d="M411.5,153.2 416.4,155.6 410.1,159.5ZM432.9,174.3 437.7,175.9 430.4,180.8ZM543.2,200.5 537.9,205.0 533.3,201.2ZM539.8,280.8 537.9,285.5 538.6,281.3Z"/>
<path fill="rgb(136,136,134)" stroke="rgb(136,136,134)" stroke-width="0.4" d="M453.8,136.8 459.9,138.7 451.1,143.3ZM435.1,182.5 439.6,184.4 432.4,189.0ZM448.3,164.8 453.2,167.3 445.4,171.4ZM459.8,178.3 464.7,180.2 456.2,184.8ZM506.0,196.8 510.2,200.2 500.7,202.7ZM494.5,217.2 498.6,219.9 489.2,222.9ZM538.6,196.5 533.3,201.2 529.0,197.3ZM533.3,201.2 528.1,206.0 523.7,202.3ZM526.2,221.4 530.2,224.7 520.9,225.6ZM558.4,238.7 554.8,240.3 553.9,234.7ZM532.3,299.3 532.0,299.3 535.0,294.7ZM534.5,294.8 531.7,299.4 534.0,295.0Z"/>
<path fill="rgb(137,137,135)" stroke="rgb(137,137,135)" stroke-width="0.4" d="M421.1,177.7 425.8,179.2 419.1,184.0ZM443.1,162.9 448.3,164.8 440.4,169.4ZM469.7,182.2 474.3,184.9 465.6,188.9ZM465.9,198.0 470.3,200.3 461.7,204.5ZM551.0,209.8 545.8,213.5 542.1,209.1ZM528.8,303.8 528.8,303.8 532.6,299.3Z"/>
<path fill="rgb(138,138,136)" stroke="rgb(138,138,136)" stroke-width="0.4" d="M435.3,167.8 440.4,169.4 432.9,174.3ZM440.4,169.4 445.4,171.4 437.7,175.9ZM495.5,208.7 499.7,211.6 490.3,214.6ZM505.0,205.9 509.1,209.2 499.7,211.6ZM523.6,235.0 527.3,238.1 518.6,238.3Z"/>
<path fill="rgb(139,139,137)" stroke="rgb(139,139,137)" stroke-width="0.4" d="M437.8,161.3 443.1,162.9 435.3,167.8ZM465.7,141.2 462.6,147.7 457.0,145.2ZM492.2,167.9 487.8,174.4 482.7,171.8ZM497.5,170.6 502.6,173.6 492.9,177.0ZM517.2,174.6 521.6,178.9 512.0,180.8ZM547.4,205.0 542.1,209.1 537.9,205.0ZM511.3,227.3 515.6,229.7 506.0,231.8ZM536.6,248.8 538.9,252.9 533.0,250.5ZM556.1,256.4 553.7,257.4 555.1,251.9Z"/>
<path fill="rgb(140,140,138)" stroke="rgb(140,140,138)" stroke-width="0.4" d="M425.3,144.5 423.5,150.9 418.0,149.2ZM432.5,160.0 437.8,161.3 430.2,166.4ZM460.9,186.9 465.6,188.9 457.1,193.5ZM516.4,184.8 520.7,188.8 511.2,190.8ZM550.0,268.5 548.2,269.1 549.9,263.7ZM545.8,265.3 544.7,270.5 543.8,266.1Z"/>
<path fill="rgb(141,141,139)" stroke="rgb(141,141,139)" stroke-width="0.4" d="M457.0,145.2 454.1,151.8 448.5,149.8ZM508.0,217.5 512.2,220.3 502.7,222.5ZM528.7,231.7 532.0,235.2 523.6,235.0ZM536.7,232.3 539.4,236.5 532.0,235.2ZM536.9,285.9 535.2,290.5 535.9,286.2Z"/>
<path fill="rgb(142,142,140)" stroke="rgb(142,142,140)" stroke-width="0.4" d="M487.6,202.2 491.5,205.5 482.5,208.5ZM541.4,262.2 541.8,266.9 539.0,263.2ZM546.0,278.5 544.7,279.0 547.7,273.8Z"/>
<path fill="rgb(143,143,141)" stroke="rgb(143,143,141)" stroke-width="0.4" d="M451.1,143.3 448.5,149.8 442.7,148.3ZM499.7,211.6 503.8,214.5 494.5,217.2ZM512.2,220.3 516.6,222.9 507.0,225.0ZM516.6,222.9 520.9,225.6 511.3,227.3ZM545.8,238.9 547.5,243.7 541.8,240.9ZM537.1,294.2 536.6,294.3 539.8,289.1ZM533.4,295.1 531.1,299.4 532.9,295.2Z"/>
<path fill="rgb(144,144,142)" stroke="rgb(144,144,142)" stroke-width="0.4" d="M462.6,147.7 459.5,154.2 454.1,151.8ZM555.5,220.9 550.8,223.8 548.8,218.4ZM546.2,255.3 546.3,260.3 543.2,256.5ZM549.2,273.3 547.7,273.8 550.0,268.5Z"/>
<path fill="rgb(145,145,143)" stroke="rgb(145,145,143)" stroke-width="0.4" d="M425.1,165.0 430.2,166.4 423.1,171.3ZM518.5,207.4 522.8,210.8 513.2,212.4ZM531.5,217.3 535.4,220.9 526.2,221.4ZM548.7,248.8 549.2,254.2 545.4,250.2ZM551.9,262.9 549.9,263.7 551.2,258.4Z"/>
<path fill="rgb(146,146,144)" stroke="rgb(146,146,144)" stroke-width="0.4" d="M421.7,157.2 427.1,158.6 419.9,163.5ZM497.6,189.5 501.8,193.1 492.6,195.8ZM511.2,190.8 515.5,194.5 506.0,196.8ZM530.1,187.7 524.8,193.1 520.7,188.8ZM537.9,205.0 532.6,209.5 528.1,206.0ZM557.9,232.7 553.9,234.7 552.4,229.2ZM546.5,269.8 544.7,275.0 544.7,270.5Z"/>
<path fill="rgb(147,147,145)" stroke="rgb(147,147,145)" stroke-width="0.4" d="M409.9,131.8 415.6,134.2 408.8,138.1ZM410.1,159.5 414.8,161.9 408.7,165.8ZM423.1,171.3 428.0,172.8 421.1,177.7ZM507.4,167.3 512.7,170.4 502.6,173.6ZM532.0,235.2 535.0,238.9 527.3,238.1ZM541.1,280.3 538.9,285.2 539.8,280.8ZM532.6,299.3 532.3,299.3 535.5,294.6Z"/>
<path fill="rgb(148,148,146)" stroke="rgb(148,148,146)" stroke-width="0.4" d="M447.0,180.3 451.6,182.7 443.9,186.8ZM481.8,162.1 477.8,168.8 472.4,167.0ZM537.7,243.0 540.3,247.1 533.7,245.1ZM540.6,288.9 539.8,289.1 543.0,283.9Z"/>
<path fill="rgb(149,149,147)" stroke="rgb(149,149,147)" stroke-width="0.4" d="M456.4,160.8 461.6,163.1 453.2,167.3ZM514.3,203.8 518.5,207.4 509.1,209.2ZM532.0,299.3 528.8,303.8 531.7,299.4Z"/>
<path fill="rgb(150,150,148)" stroke="rgb(150,150,148)" stroke-width="0.4" d="M416.4,155.6 421.7,157.2 414.8,161.9ZM440.3,154.8 445.8,156.4 437.8,161.3ZM533.7,228.4 536.7,232.3 528.7,231.7ZM551.2,258.4 549.9,263.7 548.8,259.3ZM540.3,276.6 538.6,281.3 538.8,277.2ZM543.0,283.9 542.0,284.2 544.7,279.0ZM535.2,290.5 533.4,295.1 534.4,290.7Z"/>
<path fill="rgb(151,151,149)" stroke="rgb(151,151,149)" stroke-width="0.4" d="M450.1,173.8 454.9,176.2 447.0,180.3ZM535.0,238.9 537.7,243.0 530.7,241.4Z"/>
<path fill="rgb(152,152,150)" stroke="rgb(152,152,150)" stroke-width="0.4" d="M463.4,171.7 468.6,173.6 459.8,178.3ZM522.8,210.8 527.2,213.9 517.5,215.5ZM556.8,226.7 552.4,229.2 550.8,223.8ZM543.2,256.5 543.9,261.3 540.3,257.6ZM543.8,266.1 542.9,271.1 541.8,266.9ZM541.8,276.1 539.8,280.8 540.3,276.6ZM528.8,303.8 528.8,303.8 532.3,299.3Z"/>
<path fill="rgb(153,153,151)" stroke="rgb(153,153,151)" stroke-width="0.4" d="M431.1,145.9 429.1,152.3 423.5,150.9ZM470.1,191.4 474.7,193.8 465.9,198.0ZM483.8,189.8 488.2,192.8 479.2,196.2ZM503.8,214.5 508.0,217.5 498.6,219.9ZM517.5,215.5 521.9,218.4 512.2,220.3ZM549.8,236.8 551.1,242.0 545.8,238.9Z"/>
<path fill="rgb(154,154,152)" stroke="rgb(154,154,152)" stroke-width="0.4" d="M436.9,147.1 434.7,153.5 429.1,152.3ZM439.2,140.7 445.2,141.8 436.9,147.1ZM456.2,184.8 460.9,186.9 452.6,191.4ZM533.3,201.2 537.9,205.0 528.1,206.0ZM543.9,261.3 543.8,266.1 541.4,262.2ZM531.4,299.4 528.8,303.8 531.1,299.4Z"/>
<path fill="rgb(155,155,153)" stroke="rgb(155,155,153)" stroke-width="0.4" d="M476.2,160.3 481.8,162.1 472.4,167.0ZM483.4,180.9 488.4,183.4 479.0,187.4ZM536.7,290.0 534.5,294.8 536.0,290.3Z"/>
<path fill="rgb(156,156,154)" stroke="rgb(156,156,154)" stroke-width="0.4" d="M428.9,131.9 435.1,133.2 427.1,138.2ZM435.1,133.2 441.4,134.3 433.1,139.6ZM538.9,285.2 536.7,290.0 537.9,285.5Z"/>
<path fill="rgb(157,157,155)" stroke="rgb(157,157,155)" stroke-width="0.4" d="M422.8,130.1 428.9,131.9 421.2,136.5ZM454.9,176.2 459.8,178.3 451.6,182.7ZM492.2,167.9 497.5,170.6 487.8,174.4ZM526.0,183.2 530.1,187.7 520.7,188.8ZM519.6,198.4 523.7,202.3 514.3,203.8ZM551.8,267.8 550.0,268.5 551.9,262.9Z"/>
<path fill="rgb(158,158,156)" stroke="rgb(158,158,156)" stroke-width="0.4" d="M419.6,142.9 425.3,144.5 418.0,149.2ZM474.1,151.9 470.5,158.5 464.9,156.6ZM482.7,171.8 487.8,174.4 478.5,178.3ZM541.8,240.9 543.9,245.4 537.7,243.0ZM547.2,278.0 546.0,278.5 549.2,273.3ZM539.9,284.9 537.5,289.8 538.9,285.2ZM535.5,294.6 532.3,299.3 535.0,294.7Z"/>
<path fill="rgb(159,159,157)" stroke="rgb(159,159,157)" stroke-width="0.4" d="M421.2,136.5 427.1,138.2 419.6,142.9ZM459.5,154.2 464.9,156.6 456.4,160.8ZM521.9,218.4 526.2,221.4 516.6,222.9ZM551.1,242.0 551.9,247.4 547.5,243.7ZM543.9,245.4 545.4,250.2 540.3,247.1ZM544.0,283.5 543.0,283.9 546.0,278.5Z"/>
<path fill="rgb(160,160,158)" stroke="rgb(160,160,158)" stroke-width="0.4" d="M468.6,173.6 473.7,175.5 464.7,180.2Z"/>
<path fill="rgb(161,161,159)" stroke="rgb(161,161,159)" stroke-width="0.4" d="M448.5,149.8 454.1,151.8 445.8,156.4ZM486.9,165.2 492.2,167.9 482.7,171.8ZM474.7,193.8 479.2,196.2 470.3,200.3ZM483.4,199.2 487.6,202.2 478.6,205.6ZM537.9,285.5 536.0,290.3 536.9,285.9Z"/>
<path fill="rgb(162,162,160)" stroke="rgb(162,162,160)" stroke-width="0.4" d="M536.0,290.3 534.0,295.0 535.2,290.5ZM535.0,294.7 532.0,299.3 534.5,294.8Z"/>
<path fill="rgb(163,163,161)" stroke="rgb(163,163,161)" stroke-width="0.4" d="M418.0,149.2 423.5,150.9 416.4,155.6ZM501.8,193.1 506.0,196.8 496.6,199.3ZM510.2,200.2 514.3,203.8 505.0,205.9ZM541.4,229.5 543.7,234.1 536.7,232.3ZM546.3,260.3 545.8,265.3 543.9,261.3Z"/>
<path fill="rgb(164,164,162)" stroke="rgb(164,164,162)" stroke-width="0.4" d="M427.1,138.2 433.1,139.6 425.3,144.5ZM434.7,153.5 440.3,154.8 432.5,160.0ZM451.2,158.3 456.4,160.8 448.3,164.8ZM512.7,170.4 517.2,174.6 507.7,176.7ZM500.7,202.7 505.0,205.9 495.5,208.7ZM536.8,213.2 540.6,217.2 531.5,217.3ZM553.9,215.1 548.8,218.4 545.8,213.5ZM539.4,236.5 541.8,240.9 535.0,238.9ZM555.2,246.1 555.1,251.9 551.9,247.4Z"/>
<path fill="rgb(165,165,163)" stroke="rgb(165,165,163)" stroke-width="0.4" d="M491.1,158.6 486.9,165.2 481.8,162.1ZM481.8,162.1 486.9,165.2 477.8,168.8ZM540.6,217.2 543.8,221.8 535.4,220.9ZM546.1,226.6 548.1,231.6 541.4,229.5ZM547.5,243.7 548.7,248.8 543.9,245.4Z"/>
<path fill="rgb(166,166,164)" stroke="rgb(166,166,164)" stroke-width="0.4" d="M414.8,161.9 419.9,163.5 413.2,168.3ZM441.4,134.3 447.7,135.3 439.2,140.7ZM530.2,224.7 533.7,228.4 525.0,228.4ZM543.8,221.8 546.1,226.6 538.7,225.1ZM549.9,263.7 548.2,269.1 547.9,264.5ZM536.6,294.3 536.1,294.5 539.1,289.4ZM534.0,295.0 531.4,299.4 533.4,295.1Z"/>
<path fill="rgb(167,167,165)" stroke="rgb(167,167,165)" stroke-width="0.4" d="M430.2,166.4 435.3,167.8 428.0,172.8ZM467.0,165.1 472.4,167.0 463.4,171.7ZM502.1,164.2 497.5,170.6 492.2,167.9ZM553.6,267.1 551.8,267.8 553.9,262.0ZM533.2,299.2 532.9,299.2 536.6,294.3Z"/>
<path fill="rgb(168,168,166)" stroke="rgb(168,168,166)" stroke-width="0.4" d="M473.7,175.5 478.5,178.3 469.7,182.2ZM528.1,206.0 532.6,209.5 522.8,210.8ZM542.1,209.1 545.8,213.5 536.8,213.2ZM548.8,218.4 550.8,223.8 543.8,221.8Z"/>
<path fill="rgb(169,169,167)" stroke="rgb(169,169,167)" stroke-width="0.4" d="M464.7,180.2 469.7,182.2 460.9,186.9ZM509.1,209.2 513.2,212.4 503.8,214.5ZM535.4,220.9 538.7,225.1 530.2,224.7ZM553.9,262.0 551.9,262.9 553.7,257.4Z"/>
<path fill="rgb(170,170,168)" stroke="rgb(170,170,168)" stroke-width="0.4" d="M502.1,164.2 507.4,167.3 497.5,170.6ZM523.7,202.3 528.1,206.0 518.5,207.4ZM558.4,244.7 555.2,246.1 554.8,240.3ZM546.2,274.4 543.5,279.4 544.7,275.0ZM543.2,275.5 541.1,280.3 541.8,276.1ZM531.7,299.4 528.8,303.8 531.4,299.4Z"/>
<path fill="rgb(171,171,169)" stroke="rgb(171,171,169)" stroke-width="0.4" d="M431.1,145.9 436.9,147.1 429.1,152.3ZM497.8,180.0 502.7,183.1 493.0,186.4ZM552.4,229.2 553.9,234.7 548.1,231.6ZM549.2,254.2 548.8,259.3 546.2,255.3Z"/>
<path fill="rgb(172,172,170)" stroke="rgb(172,172,170)" stroke-width="0.4" d="M433.1,139.6 439.2,140.7 431.1,145.9ZM479.0,187.4 483.8,189.8 474.7,193.8ZM488.4,183.4 493.0,186.4 483.8,189.8ZM515.5,194.5 519.6,198.4 510.2,200.2ZM527.2,213.9 531.5,217.3 521.9,218.4ZM544.7,270.5 543.2,275.5 542.9,271.1ZM539.8,289.1 539.1,289.4 542.0,284.2ZM538.3,289.6 535.5,294.6 537.5,289.8ZM537.5,289.8 535.0,294.7 536.7,290.0Z"/>
<path fill="rgb(173,173,171)" stroke="rgb(173,173,171)" stroke-width="0.4" d="M458.3,169.6 463.4,171.7 454.9,176.2ZM558.4,244.7 558.1,250.8 555.2,246.1Z"/>
<path fill="rgb(174,174,172)" stroke="rgb(174,174,172)" stroke-width="0.4" d="M478.5,178.3 483.4,180.9 474.3,184.9ZM546.0,278.5 543.0,283.9 544.7,279.0ZM544.0,283.5 540.6,288.9 543.0,283.9ZM542.0,284.2 539.1,289.4 540.9,284.5ZM532.9,299.2 532.6,299.3 536.1,294.5Z"/>
<path fill="rgb(175,175,173)" stroke="rgb(175,175,173)" stroke-width="0.4" d="M425.3,144.5 431.1,145.9 423.5,150.9ZM488.2,192.8 492.6,195.8 483.4,199.2ZM556.8,226.7 557.9,232.7 552.4,229.2ZM547.7,273.8 544.7,279.0 546.2,274.4ZM544.7,275.0 542.3,279.9 543.2,275.5ZM532.3,299.3 528.8,303.8 532.0,299.3Z"/>
<path fill="rgb(176,176,174)" stroke="rgb(176,176,174)" stroke-width="0.4" d="M492.6,195.8 496.6,199.3 487.6,202.2ZM496.6,199.3 500.7,202.7 491.5,205.5ZM550.8,223.8 552.4,229.2 546.1,226.6ZM543.7,234.1 545.8,238.9 539.4,236.5ZM555.1,251.9 553.7,257.4 552.1,253.0Z"/>
<path fill="rgb(177,177,175)" stroke="rgb(177,177,175)" stroke-width="0.4" d="M477.7,145.3 474.1,151.9 468.3,150.0ZM474.1,151.9 480.0,153.7 470.5,158.5ZM487.8,174.4 492.9,177.0 483.4,180.9ZM529.0,197.3 533.3,201.2 523.7,202.3ZM537.9,205.0 542.1,209.1 532.6,209.5ZM560.2,218.0 555.5,220.9 553.9,215.1ZM545.4,250.2 546.2,255.3 542.2,251.6ZM539.1,289.4 536.1,294.5 538.3,289.6Z"/>
<path fill="rgb(178,178,176)" stroke="rgb(178,178,176)" stroke-width="0.4" d="M442.7,148.3 448.5,149.8 440.3,154.8ZM477.8,168.8 482.7,171.8 473.7,175.5Z"/>
<path fill="rgb(179,179,177)" stroke="rgb(179,179,177)" stroke-width="0.4" d="M427.1,158.6 432.5,160.0 425.1,165.0ZM445.2,141.8 451.1,143.3 442.7,148.3ZM493.0,186.4 497.6,189.5 488.2,192.8ZM538.7,225.1 541.4,229.5 533.7,228.4ZM562.0,237.0 558.4,238.7 557.9,232.7ZM555.9,261.2 553.9,262.0 556.1,256.4Z"/>
<path fill="rgb(180,180,178)" stroke="rgb(180,180,178)" stroke-width="0.4" d="M506.9,187.0 511.2,190.8 501.8,193.1ZM520.7,188.8 524.8,193.1 515.5,194.5ZM545.8,213.5 548.8,218.4 540.6,217.2ZM553.7,257.4 551.9,262.9 551.2,258.4ZM550.0,268.5 547.7,273.8 548.2,269.1ZM542.3,279.9 539.9,284.9 541.1,280.3Z"/>
<path fill="rgb(181,181,179)" stroke="rgb(181,181,179)" stroke-width="0.4" d="M459.9,138.7 465.7,141.2 457.0,145.2ZM506.7,157.8 502.1,164.2 496.6,161.5ZM534.2,192.2 529.0,197.3 524.8,193.1Z"/>
<path fill="rgb(182,182,180)" stroke="rgb(182,182,180)" stroke-width="0.4" d="M543.2,200.5 547.4,205.0 537.9,205.0ZM548.1,231.6 549.8,236.8 543.7,234.1ZM561.7,243.3 558.4,244.7 558.4,238.7Z"/>
<path fill="rgb(183,183,181)" stroke="rgb(183,183,181)" stroke-width="0.4" d="M453.2,167.3 458.3,169.6 450.1,173.8ZM468.3,150.0 474.1,151.9 464.9,156.6ZM464.9,156.6 470.5,158.5 461.6,163.1ZM554.8,240.3 555.2,246.1 551.1,242.0ZM548.2,269.1 546.2,274.4 546.5,269.8ZM532.6,299.3 528.8,303.8 532.3,299.3Z"/>
<path fill="rgb(184,184,182)" stroke="rgb(184,184,182)" stroke-width="0.4" d="M423.5,150.9 429.1,152.3 421.7,157.2ZM530.1,187.7 534.2,192.2 524.8,193.1ZM561.0,249.6 558.1,250.8 558.4,244.7Z"/>
<path fill="rgb(185,185,183)" stroke="rgb(185,185,183)" stroke-width="0.4" d="M451.1,143.3 457.0,145.2 448.5,149.8ZM490.0,148.7 485.9,155.4 480.0,153.7ZM517.8,164.0 512.7,170.4 507.4,167.3ZM556.2,206.1 551.0,209.8 547.4,205.0ZM551.9,247.4 552.1,253.0 548.7,248.8ZM548.8,259.3 547.9,264.5 546.3,260.3ZM550.7,272.7 549.2,273.3 551.8,267.8ZM543.5,279.4 540.9,284.5 542.3,279.9Z"/>
<path fill="rgb(186,186,184)" stroke="rgb(186,186,184)" stroke-width="0.4" d="M553.9,215.1 555.5,220.9 548.8,218.4ZM540.9,284.5 538.3,289.6 539.9,284.9Z"/>
<path fill="rgb(187,187,185)" stroke="rgb(187,187,185)" stroke-width="0.4" d="M429.1,152.3 434.7,153.5 427.1,158.6ZM472.4,167.0 477.8,168.8 468.6,173.6Z"/>
<path fill="rgb(188,188,186)" stroke="rgb(188,188,186)" stroke-width="0.4" d="M461.6,163.1 467.0,165.1 458.3,169.6ZM483.8,147.1 480.0,153.7 474.1,151.9ZM502.7,183.1 506.9,187.0 497.6,189.5ZM536.6,294.3 532.9,299.2 536.1,294.5ZM528.8,303.8 528.8,303.8 532.9,299.2Z"/>
<path fill="rgb(189,189,187)" stroke="rgb(189,189,187)" stroke-width="0.4" d="M512.3,160.9 507.4,167.3 502.1,164.2ZM552.1,253.0 551.2,258.4 549.2,254.2Z"/>
<path fill="rgb(190,190,188)" stroke="rgb(190,190,188)" stroke-width="0.4" d="M436.9,147.1 442.7,148.3 434.7,153.5ZM532.6,209.5 536.8,213.2 527.2,213.9ZM551.0,209.8 553.9,215.1 545.8,213.5ZM532.9,299.2 528.8,303.8 532.6,299.3Z"/>
<path fill="rgb(191,191,189)" stroke="rgb(191,191,189)" stroke-width="0.4" d="M495.3,152.1 491.1,158.6 485.9,155.4ZM491.1,158.6 496.6,161.5 486.9,165.2ZM553.9,262.0 551.8,267.8 551.9,262.9ZM547.9,264.5 546.5,269.8 545.8,265.3Z"/>
<path fill="rgb(192,192,190)" stroke="rgb(192,192,190)" stroke-width="0.4" d="M445.8,156.4 451.2,158.3 443.1,162.9ZM492.9,177.0 497.8,180.0 488.4,183.4ZM539.8,289.1 536.6,294.3 539.1,289.4Z"/>
<path fill="rgb(194,194,192)" stroke="rgb(194,194,192)" stroke-width="0.4" d="M557.9,232.7 558.4,238.7 553.9,234.7Z"/>
<path fill="rgb(195,195,193)" stroke="rgb(195,195,193)" stroke-width="0.4" d="M465.7,141.2 471.6,143.5 462.6,147.7ZM553.9,234.7 554.8,240.3 549.8,236.8ZM549.2,273.3 546.0,278.5 547.7,273.8ZM536.1,294.5 532.6,299.3 535.5,294.6Z"/>
<path fill="rgb(196,196,194)" stroke="rgb(196,196,194)" stroke-width="0.4" d="M524.8,193.1 529.0,197.3 519.6,198.4ZM558.6,255.5 556.1,256.4 558.1,250.8Z"/>
<path fill="rgb(197,197,195)" stroke="rgb(197,197,195)" stroke-width="0.4" d="M552.7,200.8 547.4,205.0 543.2,200.5Z"/>
<path fill="rgb(198,198,196)" stroke="rgb(198,198,196)" stroke-width="0.4" d="M531.2,177.5 526.0,183.2 521.6,178.9ZM556.1,256.4 553.9,262.0 553.7,257.4Z"/>
<path fill="rgb(199,199,197)" stroke="rgb(199,199,197)" stroke-width="0.4" d="M470.5,158.5 476.2,160.3 467.0,165.1Z"/>
<path fill="rgb(200,200,198)" stroke="rgb(200,200,198)" stroke-width="0.4" d="M477.7,145.3 483.8,147.1 474.1,151.9Z"/>
<path fill="rgb(202,202,200)" stroke="rgb(202,202,200)" stroke-width="0.4" d="M561.7,243.3 561.0,249.6 558.4,244.7ZM544.7,279.0 542.0,284.2 543.5,279.4Z"/>
<path fill="rgb(203,203,201)" stroke="rgb(203,203,201)" stroke-width="0.4" d="M454.1,151.8 459.5,154.2 451.2,158.3ZM485.9,155.4 491.1,158.6 481.8,162.1ZM522.3,168.5 517.2,174.6 512.7,170.4ZM526.8,172.9 521.6,178.9 517.2,174.6ZM555.5,220.9 556.8,226.7 550.8,223.8ZM550.7,272.7 547.2,278.0 549.2,273.3Z"/>
<path fill="rgb(204,204,202)" stroke="rgb(204,204,202)" stroke-width="0.4" d="M457.0,145.2 462.6,147.7 454.1,151.8ZM561.1,224.3 556.8,226.7 555.5,220.9Z"/>
<path fill="rgb(205,205,203)" stroke="rgb(205,205,203)" stroke-width="0.4" d="M483.8,147.1 490.0,148.7 480.0,153.7ZM551.9,262.9 550.0,268.5 549.9,263.7ZM553.6,267.1 550.7,272.7 551.8,267.8ZM551.8,267.8 549.2,273.3 550.0,268.5Z"/>
<path fill="rgb(208,208,206)" stroke="rgb(208,208,206)" stroke-width="0.4" d="M462.6,147.7 468.3,150.0 459.5,154.2Z"/>
<path fill="rgb(209,209,207)" stroke="rgb(209,209,207)" stroke-width="0.4" d="M501.0,155.0 496.6,161.5 491.1,158.6Z"/>
<path fill="rgb(210,210,208)" stroke="rgb(210,210,208)" stroke-width="0.4" d="M558.9,211.8 553.9,215.1 551.0,209.8ZM558.1,250.8 556.1,256.4 555.1,251.9Z"/>
<path fill="rgb(211,211,209)" stroke="rgb(211,211,209)" stroke-width="0.4" d="M562.0,230.6 557.9,232.7 556.8,226.7ZM540.6,288.9 537.1,294.2 539.8,289.1Z"/>
<path fill="rgb(213,213,211)" stroke="rgb(213,213,211)" stroke-width="0.4" d="M526.8,172.9 531.2,177.5 521.6,178.9Z"/>
<path fill="rgb(214,214,212)" stroke="rgb(214,214,212)" stroke-width="0.4" d="M506.7,157.8 512.3,160.9 502.1,164.2ZM547.2,278.0 544.0,283.5 546.0,278.5ZM543.0,283.9 539.8,289.1 542.0,284.2Z"/>
<path fill="rgb(216,216,214)" stroke="rgb(216,216,214)" stroke-width="0.4" d="M471.6,143.5 477.7,145.3 468.3,150.0ZM480.0,153.7 485.9,155.4 476.2,160.3ZM558.6,255.5 555.9,261.2 556.1,256.4Z"/>
<path fill="rgb(217,217,215)" stroke="rgb(217,217,215)" stroke-width="0.4" d="M537.1,294.2 533.2,299.2 536.6,294.3Z"/>
<path fill="rgb(218,218,216)" stroke="rgb(218,218,216)" stroke-width="0.4" d="M558.4,238.7 558.4,244.7 554.8,240.3ZM533.2,299.2 528.8,303.8 532.9,299.2Z"/>
<path fill="rgb(220,220,218)" stroke="rgb(220,220,218)" stroke-width="0.4" d="M496.6,161.5 502.1,164.2 492.2,167.9ZM538.6,196.5 543.2,200.5 533.3,201.2ZM547.4,205.0 551.0,209.8 542.1,209.1ZM562.0,237.0 561.7,243.3 558.4,238.7Z"/>
<path fill="rgb(221,221,219)" stroke="rgb(221,221,219)" stroke-width="0.4" d="M535.4,182.3 530.1,187.7 526.0,183.2Z"/>
<path fill="rgb(222,222,220)" stroke="rgb(222,222,220)" stroke-width="0.4" d="M534.2,192.2 538.6,196.5 529.0,197.3Z"/>
<path fill="rgb(223,223,221)" stroke="rgb(223,223,221)" stroke-width="0.4" d="M543.9,191.7 538.6,196.5 534.2,192.2Z"/>
<path fill="rgb(224,224,222)" stroke="rgb(224,224,222)" stroke-width="0.4" d="M535.4,182.3 539.5,187.2 530.1,187.7ZM539.5,187.2 534.2,192.2 530.1,187.7Z"/>
<path fill="rgb(227,227,225)" stroke="rgb(227,227,225)" stroke-width="0.4" d="M548.5,196.1 543.2,200.5 538.6,196.5Z"/>
<path fill="rgb(228,228,226)" stroke="rgb(228,228,226)" stroke-width="0.4" d="M561.1,224.3 562.0,230.6 556.8,226.7ZM555.9,261.2 553.6,267.1 553.9,262.0Z"/>
<path fill="rgb(235,235,233)" stroke="rgb(235,235,233)" stroke-width="0.4" d="M495.3,152.1 501.0,155.0 491.1,158.6Z"/>
<path fill="rgb(236,236,234)" stroke="rgb(236,236,234)" stroke-width="0.4" d="M561.0,249.6 558.6,255.5 558.1,250.8Z"/>
<path fill="rgb(240,240,238)" stroke="rgb(240,240,238)" stroke-width="0.4" d="M517.8,164.0 522.3,168.5 512.7,170.4Z"/>
<path fill="rgb(241,241,239)" stroke="rgb(241,241,239)" stroke-width="0.4" d="M558.9,211.8 560.2,218.0 553.9,215.1Z"/>
<path fill="rgb(242,242,240)" stroke="rgb(242,242,240)" stroke-width="0.4" d="M490.0,148.7 495.3,152.1 485.9,155.4ZM501.0,155.0 506.7,157.8 496.6,161.5ZM512.3,160.9 517.8,164.0 507.4,167.3ZM522.3,168.5 526.8,172.9 517.2,174.6ZM531.2,177.5 535.4,182.3 526.0,183.2ZM539.5,187.2 543.9,191.7 534.2,192.2ZM543.9,191.7 548.5,196.1 538.6,196.5ZM548.5,196.1 552.7,200.8 543.2,200.5ZM552.7,200.8 556.2,206.1 547.4,205.0ZM556.2,206.1 558.9,211.8 551.0,209.8ZM560.2,218.0 561.1,224.3 555.5,220.9ZM562.0,230.6 562.0,237.0 557.9,232.7Z"/>
</g>
<path d="M496,164 L503,166 L502,171 L497,169 Z" fill="#2e2d2d"/>
<path d="M416.9,127.8l2.4,1.0M416.9,127.8l0.2,2.9M416.9,127.8l-1.9,0.8M415.6,134.2l2.4,1.0M415.6,134.2l0.1,2.9M415.6,134.2l-2.0,0.8M414.2,140.5l2.4,1.0M414.2,140.5l0.1,2.9M414.2,140.5l-2.0,0.8M412.8,146.8l2.4,1.1M412.8,146.8l0.0,2.9M412.8,146.8l-2.0,0.7M411.5,153.2l2.3,1.1M411.5,153.2l-0.1,2.9M411.5,153.2l-2.0,0.7M410.1,159.5l2.3,1.2M410.1,159.5l-0.1,2.9M410.1,159.5l-2.0,0.6M408.7,165.8l2.3,1.2M408.7,165.8l-0.2,2.9M408.7,165.8l-2.0,0.6M422.8,130.1l2.5,0.7M422.8,130.1l0.5,2.8M422.8,130.1l-1.9,1.0M421.2,136.5l2.5,0.7M421.2,136.5l0.4,2.8M421.2,136.5l-1.9,1.0M419.6,142.9l2.5,0.7M419.6,142.9l0.4,2.8M419.6,142.9l-1.9,1.0M418.0,149.2l2.5,0.7M418.0,149.2l0.4,2.8M418.0,149.2l-1.9,1.0M416.4,155.6l2.5,0.8M416.4,155.6l0.4,2.8M416.4,155.6l-1.9,1.0M414.8,161.9l2.5,0.8M414.8,161.9l0.4,2.8M414.8,161.9l-1.9,1.0M413.2,168.3l2.5,0.8M413.2,168.3l0.4,2.8M413.2,168.3l-1.9,1.0M428.9,131.9l2.5,0.6M428.9,131.9l0.6,2.8M428.9,131.9l-1.8,1.1M427.1,138.2l2.5,0.6M427.1,138.2l0.6,2.8M427.1,138.2l-1.8,1.1M425.3,144.5l2.5,0.6M425.3,144.5l0.6,2.8M425.3,144.5l-1.8,1.1M423.5,150.9l2.5,0.6M423.5,150.9l0.5,2.8M423.5,150.9l-1.8,1.1M421.7,157.2l2.5,0.7M421.7,157.2l0.5,2.8M421.7,157.2l-1.8,1.1M419.9,163.5l2.5,0.7M419.9,163.5l0.4,2.8M419.9,163.5l-1.9,1.0M418.1,169.9l2.5,0.7M418.1,169.9l0.4,2.8M418.1,169.9l-1.9,1.0M435.1,133.2l2.6,0.4M435.1,133.2l0.7,2.8M435.1,133.2l-1.7,1.2M433.1,139.6l2.6,0.5M433.1,139.6l0.7,2.8M433.1,139.6l-1.8,1.2M431.1,145.9l2.5,0.5M431.1,145.9l0.6,2.8M431.1,145.9l-1.8,1.2M429.1,152.3l2.5,0.6M429.1,152.3l0.6,2.8M429.1,152.3l-1.8,1.1M427.1,158.6l2.5,0.6M427.1,158.6l0.5,2.8M427.1,158.6l-1.8,1.1M425.1,165.0l2.5,0.7M425.1,165.0l0.5,2.8M425.1,165.0l-1.8,1.1M423.1,171.3l2.5,0.7M423.1,171.3l0.4,2.8M423.1,171.3l-1.9,1.0M441.4,134.3l2.6,0.4M441.4,134.3l0.8,2.7M441.4,134.3l-1.7,1.3M439.2,140.7l2.6,0.4M439.2,140.7l0.7,2.8M439.2,140.7l-1.7,1.2M436.9,147.1l2.6,0.5M436.9,147.1l0.7,2.8M436.9,147.1l-1.8,1.2M434.7,153.5l2.5,0.6M434.7,153.5l0.6,2.8M434.7,153.5l-1.8,1.1M432.5,160.0l2.5,0.6M432.5,160.0l0.5,2.8M432.5,160.0l-1.8,1.1M430.2,166.4l2.5,0.7M430.2,166.4l0.5,2.8M430.2,166.4l-1.8,1.0M428.0,172.8l2.5,0.8M428.0,172.8l0.4,2.8M428.0,172.8l-1.9,1.0M447.7,135.3l2.5,0.6M447.7,135.3l0.5,2.8M447.7,135.3l-1.8,1.1M445.2,141.8l2.5,0.7M445.2,141.8l0.5,2.8M445.2,141.8l-1.8,1.1M442.7,148.3l2.5,0.7M442.7,148.3l0.5,2.8M442.7,148.3l-1.8,1.0M440.3,154.8l2.5,0.7M440.3,154.8l0.4,2.8M440.3,154.8l-1.9,1.0M437.8,161.3l2.5,0.8M437.8,161.3l0.4,2.8M437.8,161.3l-1.9,1.0M435.3,167.8l2.5,0.8M435.3,167.8l0.3,2.8M435.3,167.8l-1.9,1.0M432.9,174.3l2.5,0.8M432.9,174.3l0.3,2.8M432.9,174.3l-1.9,0.9M453.8,136.8l2.5,0.8M453.8,136.8l0.4,2.8M453.8,136.8l-1.9,1.0M451.1,143.3l2.5,0.8M451.1,143.3l0.3,2.8M451.1,143.3l-1.9,1.0M448.5,149.8l2.5,0.8M448.5,149.8l0.3,2.8M448.5,149.8l-1.9,0.9M445.8,156.4l2.4,0.9M445.8,156.4l0.3,2.9M445.8,156.4l-1.9,0.9M443.1,162.9l2.4,0.9M443.1,162.9l0.2,2.9M443.1,162.9l-1.9,0.9M440.4,169.4l2.4,1.0M440.4,169.4l0.2,2.9M440.4,169.4l-1.9,0.8M437.7,175.9l2.4,1.0M437.7,175.9l0.1,2.9M437.7,175.9l-2.0,0.8M459.9,138.7l2.4,1.0M459.9,138.7l0.1,2.9M459.9,138.7l-2.0,0.8M457.0,145.2l2.4,1.0M457.0,145.2l0.1,2.9M457.0,145.2l-2.0,0.8M454.1,151.8l2.4,1.1M454.1,151.8l0.0,2.9M454.1,151.8l-2.0,0.7M451.2,158.3l2.4,1.1M451.2,158.3l-0.0,2.9M451.2,158.3l-2.0,0.7M448.3,164.8l2.3,1.1M448.3,164.8l-0.1,2.9M448.3,164.8l-2.0,0.7M445.4,171.4l2.3,1.2M445.4,171.4l-0.1,2.9M445.4,171.4l-2.0,0.7M442.5,177.9l2.3,1.2M442.5,177.9l-0.2,2.9M442.5,177.9l-2.0,0.6M465.7,141.2l2.4,0.9M465.7,141.2l0.2,2.9M465.7,141.2l-1.9,0.9M462.6,147.7l2.4,1.0M462.6,147.7l0.1,2.9M462.6,147.7l-2.0,0.8M459.5,154.2l2.4,1.0M459.5,154.2l0.1,2.9M459.5,154.2l-2.0,0.8M456.4,160.8l2.4,1.1M456.4,160.8l0.0,2.9M456.4,160.8l-2.0,0.8M453.2,167.3l2.4,1.1M453.2,167.3l-0.0,2.9M453.2,167.3l-2.0,0.7M450.1,173.8l2.3,1.2M450.1,173.8l-0.1,2.9M450.1,173.8l-2.0,0.7M447.0,180.3l2.3,1.2M447.0,180.3l-0.1,2.9M447.0,180.3l-2.0,0.6M471.6,143.5l2.5,0.7M471.6,143.5l0.4,2.8M471.6,143.5l-1.9,1.0M468.3,150.0l2.5,0.8M468.3,150.0l0.3,2.8M468.3,150.0l-1.9,1.0M464.9,156.6l2.5,0.8M464.9,156.6l0.3,2.8M464.9,156.6l-1.9,0.9M461.6,163.1l2.4,0.9M461.6,163.1l0.2,2.9M461.6,163.1l-1.9,0.9M458.3,169.6l2.4,1.0M458.3,169.6l0.2,2.9M458.3,169.6l-1.9,0.8M454.9,176.2l2.4,1.0M454.9,176.2l0.1,2.9M454.9,176.2l-2.0,0.8M451.6,182.7l2.4,1.1M451.6,182.7l-0.0,2.9M451.6,182.7l-2.0,0.7M477.7,145.3l2.5,0.7M477.7,145.3l0.4,2.8M477.7,145.3l-1.9,1.0M474.1,151.9l2.5,0.8M474.1,151.9l0.4,2.8M474.1,151.9l-1.9,1.0M470.5,158.5l2.5,0.8M470.5,158.5l0.3,2.8M470.5,158.5l-1.9,1.0M467.0,165.1l2.5,0.9M467.0,165.1l0.3,2.8M467.0,165.1l-1.9,0.9M463.4,171.7l2.4,0.9M463.4,171.7l0.2,2.9M463.4,171.7l-1.9,0.9M459.8,178.3l2.4,1.0M459.8,178.3l0.1,2.9M459.8,178.3l-1.9,0.8M456.2,184.8l2.4,1.0M456.2,184.8l0.1,2.9M456.2,184.8l-2.0,0.8M483.8,147.1l2.5,0.7M483.8,147.1l0.5,2.8M483.8,147.1l-1.8,1.0M480.0,153.7l2.5,0.7M480.0,153.7l0.4,2.8M480.0,153.7l-1.9,1.0M476.2,160.3l2.5,0.8M476.2,160.3l0.4,2.8M476.2,160.3l-1.9,1.0M472.4,167.0l2.5,0.8M472.4,167.0l0.3,2.8M472.4,167.0l-1.9,0.9M468.6,173.6l2.4,0.9M468.6,173.6l0.2,2.9M468.6,173.6l-1.9,0.9M464.7,180.2l2.4,1.0M464.7,180.2l0.2,2.9M464.7,180.2l-1.9,0.8M460.9,186.9l2.4,1.0M460.9,186.9l0.1,2.9M460.9,186.9l-2.0,0.8M490.0,148.7l2.2,1.4M490.0,148.7l-0.4,2.8M490.0,148.7l-2.1,0.5M485.9,155.4l2.2,1.4M485.9,155.4l-0.3,2.8M485.9,155.4l-2.1,0.5M481.8,162.1l2.2,1.3M481.8,162.1l-0.3,2.8M481.8,162.1l-2.1,0.5M477.8,168.8l2.2,1.3M477.8,168.8l-0.3,2.8M477.8,168.8l-2.1,0.5M473.7,175.5l2.2,1.3M473.7,175.5l-0.3,2.9M473.7,175.5l-2.1,0.5M469.7,182.2l2.3,1.3M469.7,182.2l-0.3,2.9M469.7,182.2l-2.0,0.6M465.6,188.9l2.3,1.3M465.6,188.9l-0.2,2.9M465.6,188.9l-2.0,0.6M495.3,152.1l2.3,1.2M495.3,152.1l-0.1,2.9M495.3,152.1l-2.0,0.6M491.1,158.6l2.3,1.2M491.1,158.6l-0.1,2.9M491.1,158.6l-2.0,0.6M486.9,165.2l2.3,1.2M486.9,165.2l-0.1,2.9M486.9,165.2l-2.0,0.6M482.7,171.8l2.3,1.2M482.7,171.8l-0.1,2.9M482.7,171.8l-2.0,0.6M478.5,178.3l2.3,1.2M478.5,178.3l-0.1,2.9M478.5,178.3l-2.0,0.6M474.3,184.9l2.3,1.2M474.3,184.9l-0.2,2.9M474.3,184.9l-2.0,0.6M470.1,191.4l2.3,1.2M470.1,191.4l-0.2,2.9M470.1,191.4l-2.0,0.6M501.0,155.0l2.3,1.2M501.0,155.0l-0.1,2.9M501.0,155.0l-2.0,0.7M496.6,161.5l2.3,1.2M496.6,161.5l-0.1,2.9M496.6,161.5l-2.0,0.7M492.2,167.9l2.3,1.2M492.2,167.9l-0.1,2.9M492.2,167.9l-2.0,0.7M487.8,174.4l2.3,1.2M487.8,174.4l-0.1,2.9M487.8,174.4l-2.0,0.7M483.4,180.9l2.3,1.2M483.4,180.9l-0.1,2.9M483.4,180.9l-2.0,0.6M479.0,187.4l2.3,1.2M479.0,187.4l-0.1,2.9M479.0,187.4l-2.0,0.6M474.7,193.8l2.3,1.2M474.7,193.8l-0.2,2.9M474.7,193.8l-2.0,0.6M506.7,157.8l2.3,1.2M506.7,157.8l-0.2,2.9M506.7,157.8l-2.0,0.6M502.1,164.2l2.3,1.3M502.1,164.2l-0.2,2.9M502.1,164.2l-2.0,0.6M497.5,170.6l2.2,1.3M497.5,170.6l-0.3,2.8M497.5,170.6l-2.1,0.5M492.9,177.0l2.2,1.4M492.9,177.0l-0.3,2.8M492.9,177.0l-2.1,0.5M488.4,183.4l2.2,1.4M488.4,183.4l-0.4,2.8M488.4,183.4l-2.1,0.5M483.8,189.8l2.2,1.4M483.8,189.8l-0.5,2.8M483.8,189.8l-2.1,0.4M479.2,196.2l2.1,1.5M479.2,196.2l-0.5,2.8M479.2,196.2l-2.1,0.4M512.3,160.9l2.3,1.3M512.3,160.9l-0.2,2.9M512.3,160.9l-2.0,0.6M507.4,167.3l2.2,1.3M507.4,167.3l-0.3,2.8M507.4,167.3l-2.1,0.5M502.6,173.6l2.2,1.4M502.6,173.6l-0.3,2.8M502.6,173.6l-2.1,0.5M497.8,180.0l2.2,1.4M497.8,180.0l-0.4,2.8M497.8,180.0l-2.1,0.5M493.0,186.4l2.2,1.4M493.0,186.4l-0.4,2.8M493.0,186.4l-2.1,0.4M488.2,192.8l2.1,1.5M488.2,192.8l-0.5,2.8M488.2,192.8l-2.1,0.4M483.4,199.2l2.1,1.5M483.4,199.2l-0.5,2.8M483.4,199.2l-2.1,0.3M517.8,164.0l1.9,1.8M517.8,164.0l-1.0,2.7M517.8,164.0l-2.1,0.0M512.7,170.4l1.9,1.8M512.7,170.4l-0.9,2.7M512.7,170.4l-2.1,0.0M507.7,176.7l1.9,1.8M507.7,176.7l-0.9,2.7M507.7,176.7l-2.1,0.1M502.7,183.1l1.9,1.8M502.7,183.1l-0.9,2.7M502.7,183.1l-2.1,0.1M497.6,189.5l1.9,1.7M497.6,189.5l-0.8,2.7M497.6,189.5l-2.1,0.1M492.6,195.8l2.0,1.7M492.6,195.8l-0.8,2.8M492.6,195.8l-2.1,0.1M487.6,202.2l2.0,1.7M487.6,202.2l-0.8,2.8M487.6,202.2l-2.1,0.2M522.3,168.5l1.9,1.8M522.3,168.5l-1.0,2.7M522.3,168.5l-2.1,0.0M517.2,174.6l1.9,1.8M517.2,174.6l-0.9,2.7M517.2,174.6l-2.1,0.1M512.0,180.8l1.9,1.8M512.0,180.8l-0.9,2.7M512.0,180.8l-2.1,0.1M506.9,187.0l1.9,1.7M506.9,187.0l-0.8,2.7M506.9,187.0l-2.1,0.1M501.8,193.1l2.0,1.7M501.8,193.1l-0.8,2.8M501.8,193.1l-2.1,0.2M496.6,199.3l2.0,1.7M496.6,199.3l-0.7,2.8M496.6,199.3l-2.1,0.2M491.5,205.5l2.0,1.6M491.5,205.5l-0.7,2.8M491.5,205.5l-2.1,0.2M526.8,172.9l1.8,1.9M526.8,172.9l-1.0,2.7M526.8,172.9l-2.1,-0.0M521.6,178.9l1.9,1.8M521.6,178.9l-1.0,2.7M521.6,178.9l-2.1,0.0M516.4,184.8l1.9,1.8M516.4,184.8l-0.9,2.7M516.4,184.8l-2.1,0.1M511.2,190.8l2.0,1.7M511.2,190.8l-0.8,2.8M511.2,190.8l-2.1,0.2M506.0,196.8l2.0,1.6M506.0,196.8l-0.7,2.8M506.0,196.8l-2.1,0.2M500.7,202.7l2.1,1.6M500.7,202.7l-0.6,2.8M500.7,202.7l-2.1,0.3M495.5,208.7l2.1,1.5M495.5,208.7l-0.5,2.8M495.5,208.7l-2.1,0.4M531.2,177.5l1.7,2.0M531.2,177.5l-1.2,2.6M531.2,177.5l-2.1,-0.2M526.0,183.2l1.7,1.9M526.0,183.2l-1.1,2.6M526.0,183.2l-2.1,-0.1M520.7,188.8l1.8,1.9M520.7,188.8l-1.0,2.7M520.7,188.8l-2.1,-0.0M515.5,194.5l1.9,1.8M515.5,194.5l-0.9,2.7M515.5,194.5l-2.1,0.1M510.2,200.2l2.0,1.7M510.2,200.2l-0.8,2.7M510.2,200.2l-2.1,0.1M505.0,205.9l2.0,1.6M505.0,205.9l-0.7,2.8M505.0,205.9l-2.1,0.2M499.7,211.6l2.1,1.5M499.7,211.6l-0.5,2.8M499.7,211.6l-2.1,0.3M535.4,182.3l1.7,2.0M535.4,182.3l-1.2,2.6M535.4,182.3l-2.1,-0.2M530.1,187.7l1.7,1.9M530.1,187.7l-1.1,2.6M530.1,187.7l-2.1,-0.1M524.8,193.1l1.8,1.9M524.8,193.1l-1.0,2.7M524.8,193.1l-2.1,-0.0M519.6,198.4l1.9,1.8M519.6,198.4l-0.9,2.7M519.6,198.4l-2.1,0.1M514.3,203.8l2.0,1.7M514.3,203.8l-0.8,2.7M514.3,203.8l-2.1,0.1M509.1,209.2l2.0,1.6M509.1,209.2l-0.7,2.8M509.1,209.2l-2.1,0.2M503.8,214.5l2.1,1.5M503.8,214.5l-0.5,2.8M503.8,214.5l-2.1,0.3M539.5,187.2l1.8,1.9M539.5,187.2l-1.0,2.7M539.5,187.2l-2.1,-0.0M534.2,192.2l1.9,1.8M534.2,192.2l-0.9,2.7M534.2,192.2l-2.1,0.0M529.0,197.3l1.9,1.7M529.0,197.3l-0.9,2.7M529.0,197.3l-2.1,0.1M523.7,202.3l2.0,1.7M523.7,202.3l-0.8,2.8M523.7,202.3l-2.1,0.2M518.5,207.4l2.0,1.6M518.5,207.4l-0.7,2.8M518.5,207.4l-2.1,0.3M513.2,212.4l2.1,1.5M513.2,212.4l-0.5,2.8M513.2,212.4l-2.1,0.3M508.0,217.5l2.2,1.4M508.0,217.5l-0.4,2.8M508.0,217.5l-2.1,0.4M543.9,191.7l1.9,1.8M543.9,191.7l-0.9,2.7M543.9,191.7l-2.1,0.1M538.6,196.5l1.9,1.7M538.6,196.5l-0.8,2.7M538.6,196.5l-2.1,0.1M533.3,201.2l2.0,1.7M533.3,201.2l-0.7,2.8M533.3,201.2l-2.1,0.2M528.1,206.0l2.1,1.6M528.1,206.0l-0.6,2.8M528.1,206.0l-2.1,0.3M522.8,210.8l2.1,1.5M522.8,210.8l-0.5,2.8M522.8,210.8l-2.1,0.3M517.5,215.5l2.2,1.4M517.5,215.5l-0.4,2.8M517.5,215.5l-2.1,0.4M512.2,220.3l2.2,1.3M512.2,220.3l-0.3,2.8M512.2,220.3l-2.1,0.5M548.5,196.1l1.7,2.0M548.5,196.1l-1.2,2.6M548.5,196.1l-2.1,-0.1M543.2,200.5l1.8,1.9M543.2,200.5l-1.1,2.7M543.2,200.5l-2.1,-0.1M537.9,205.0l1.9,1.8M537.9,205.0l-0.9,2.7M537.9,205.0l-2.1,0.0M532.6,209.5l1.9,1.7M532.6,209.5l-0.8,2.7M532.6,209.5l-2.1,0.1M527.2,213.9l2.0,1.6M527.2,213.9l-0.7,2.8M527.2,213.9l-2.1,0.2M521.9,218.4l2.1,1.5M521.9,218.4l-0.5,2.8M521.9,218.4l-2.1,0.3M516.6,222.9l2.2,1.4M516.6,222.9l-0.4,2.8M516.6,222.9l-2.1,0.5M552.7,200.8l1.5,2.2M552.7,200.8l-1.5,2.4M552.7,200.8l-2.1,-0.4M547.4,205.0l1.6,2.1M547.4,205.0l-1.4,2.5M547.4,205.0l-2.1,-0.3M542.1,209.1l1.7,2.0M542.1,209.1l-1.2,2.6M542.1,209.1l-2.1,-0.2M536.8,213.2l1.8,1.9M536.8,213.2l-1.1,2.7M536.8,213.2l-2.1,-0.1M531.5,217.3l1.9,1.8M531.5,217.3l-0.9,2.7M531.5,217.3l-2.1,0.1M526.2,221.4l2.0,1.6M526.2,221.4l-0.7,2.8M526.2,221.4l-2.1,0.2M520.9,225.6l2.1,1.5M520.9,225.6l-0.5,2.8M520.9,225.6l-2.1,0.4M556.2,206.1l1.1,2.4M556.2,206.1l-1.8,2.2M556.2,206.1l-2.0,-0.7M551.0,209.8l1.2,2.3M551.0,209.8l-1.7,2.3M551.0,209.8l-2.0,-0.6M545.8,213.5l1.4,2.2M545.8,213.5l-1.6,2.4M545.8,213.5l-2.1,-0.5M540.6,217.2l1.5,2.1M540.6,217.2l-1.4,2.5M540.6,217.2l-2.1,-0.4M535.4,220.9l1.6,2.0M535.4,220.9l-1.3,2.6M535.4,220.9l-2.1,-0.2M530.2,224.7l1.8,1.9M530.2,224.7l-1.1,2.7M530.2,224.7l-2.1,-0.1M525.0,228.4l1.9,1.7M525.0,228.4l-0.9,2.7M525.0,228.4l-2.1,0.1M558.9,211.8l0.5,2.5M558.9,211.8l-2.3,1.7M558.9,211.8l-1.8,-1.2M553.9,215.1l0.7,2.5M553.9,215.1l-2.2,1.9M553.9,215.1l-1.8,-1.0M548.8,218.4l0.9,2.4M548.8,218.4l-2.0,2.0M548.8,218.4l-1.9,-0.9M543.8,221.8l1.1,2.4M543.8,221.8l-1.8,2.2M543.8,221.8l-2.0,-0.7M538.7,225.1l1.3,2.2M538.7,225.1l-1.6,2.4M538.7,225.1l-2.1,-0.5M533.7,228.4l1.6,2.1M533.7,228.4l-1.4,2.5M533.7,228.4l-2.1,-0.3M528.7,231.7l1.8,1.9M528.7,231.7l-1.1,2.7M528.7,231.7l-2.1,-0.1M560.2,218.0l0.4,2.6M560.2,218.0l-2.4,1.6M560.2,218.0l-1.7,-1.3M555.5,220.9l0.6,2.5M555.5,220.9l-2.3,1.7M555.5,220.9l-1.8,-1.1M550.8,223.8l0.8,2.5M550.8,223.8l-2.1,1.9M550.8,223.8l-1.9,-1.0M546.1,226.6l1.0,2.4M546.1,226.6l-2.0,2.1M546.1,226.6l-1.9,-0.8M541.4,229.5l1.2,2.3M541.4,229.5l-1.8,2.3M541.4,229.5l-2.0,-0.7M536.7,232.3l1.4,2.2M536.7,232.3l-1.5,2.4M536.7,232.3l-2.1,-0.4M532.0,235.2l1.6,2.0M532.0,235.2l-1.3,2.6M532.0,235.2l-2.1,-0.2M561.1,224.3l0.3,2.6M561.1,224.3l-2.4,1.5M561.1,224.3l-1.7,-1.3M556.8,226.7l0.5,2.6M556.8,226.7l-2.3,1.7M556.8,226.7l-1.8,-1.2M552.4,229.2l0.7,2.5M552.4,229.2l-2.2,1.8M552.4,229.2l-1.8,-1.1M548.1,231.6l0.8,2.5M548.1,231.6l-2.1,2.0M548.1,231.6l-1.9,-0.9M543.7,234.1l1.0,2.4M543.7,234.1l-1.9,2.1M543.7,234.1l-2.0,-0.8M539.4,236.5l1.2,2.3M539.4,236.5l-1.7,2.3M539.4,236.5l-2.0,-0.6M535.0,238.9l1.4,2.2M535.0,238.9l-1.5,2.4M535.0,238.9l-2.1,-0.4M562.0,230.6l0.0,2.6M562.0,230.6l-2.6,1.2M562.0,230.6l-1.5,-1.5M557.9,232.7l0.2,2.6M557.9,232.7l-2.5,1.4M557.9,232.7l-1.6,-1.4M553.9,234.7l0.4,2.6M553.9,234.7l-2.4,1.6M553.9,234.7l-1.7,-1.3M549.8,236.8l0.6,2.5M549.8,236.8l-2.2,1.8M549.8,236.8l-1.8,-1.1M545.8,238.9l0.9,2.5M545.8,238.9l-2.1,2.0M545.8,238.9l-1.9,-0.9M541.8,240.9l1.1,2.4M541.8,240.9l-1.8,2.2M541.8,240.9l-2.0,-0.7M537.7,243.0l1.4,2.2M537.7,243.0l-1.6,2.4M537.7,243.0l-2.1,-0.5M562.0,237.0l-0.1,2.6M562.0,237.0l-2.7,1.1M562.0,237.0l-1.4,-1.6M558.4,238.7l0.0,2.6M558.4,238.7l-2.6,1.2M558.4,238.7l-1.5,-1.5M554.8,240.3l0.2,2.6M554.8,240.3l-2.5,1.4M554.8,240.3l-1.6,-1.4M551.1,242.0l0.4,2.6M551.1,242.0l-2.4,1.6M551.1,242.0l-1.7,-1.3M547.5,243.7l0.6,2.5M547.5,243.7l-2.3,1.8M547.5,243.7l-1.8,-1.1M543.9,245.4l0.8,2.5M543.9,245.4l-2.1,1.9M543.9,245.4l-1.9,-1.0M540.3,247.1l1.0,2.4M540.3,247.1l-1.9,2.1M540.3,247.1l-2.0,-0.8M561.7,243.3l-0.3,2.6M561.7,243.3l-2.7,0.9M561.7,243.3l-1.3,-1.6M558.4,244.7l-0.1,2.6M558.4,244.7l-2.7,1.1M558.4,244.7l-1.4,-1.6M555.2,246.1l-0.0,2.6M555.2,246.1l-2.6,1.2M555.2,246.1l-1.5,-1.5M551.9,247.4l0.1,2.6M551.9,247.4l-2.6,1.3M551.9,247.4l-1.6,-1.4M548.7,248.8l0.2,2.6M548.7,248.8l-2.5,1.4M548.7,248.8l-1.6,-1.4M545.4,250.2l0.4,2.6M545.4,250.2l-2.4,1.6M545.4,250.2l-1.7,-1.3M542.2,251.6l0.6,2.5M542.2,251.6l-2.3,1.7M542.2,251.6l-1.8,-1.1M561.0,249.6l-1.0,2.4M561.0,249.6l-2.9,0.1M561.0,249.6l-0.8,-2.0M558.1,250.8l-0.8,2.5M558.1,250.8l-2.8,0.3M558.1,250.8l-0.9,-1.9M555.1,251.9l-0.6,2.5M555.1,251.9l-2.8,0.5M555.1,251.9l-1.1,-1.8M552.1,253.0l-0.4,2.6M552.1,253.0l-2.8,0.7M552.1,253.0l-1.2,-1.7M549.2,254.2l-0.2,2.6M549.2,254.2l-2.7,1.0M549.2,254.2l-1.4,-1.6M546.2,255.3l0.1,2.6M546.2,255.3l-2.6,1.3M546.2,255.3l-1.5,-1.5M543.2,256.5l0.3,2.6M543.2,256.5l-2.4,1.5M543.2,256.5l-1.7,-1.3M558.6,255.5l-1.1,2.4M558.6,255.5l-2.9,-0.0M558.6,255.5l-0.7,-2.0M556.1,256.4l-1.0,2.4M556.1,256.4l-2.9,0.1M556.1,256.4l-0.8,-2.0M553.7,257.4l-0.8,2.5M553.7,257.4l-2.8,0.3M553.7,257.4l-1.0,-1.9M551.2,258.4l-0.6,2.5M551.2,258.4l-2.8,0.5M551.2,258.4l-1.1,-1.8M548.8,259.3l-0.5,2.6M548.8,259.3l-2.8,0.7M548.8,259.3l-1.2,-1.7M546.3,260.3l-0.2,2.6M546.3,260.3l-2.7,0.9M546.3,260.3l-1.3,-1.6M543.9,261.3l-0.0,2.6M543.9,261.3l-2.6,1.2M543.9,261.3l-1.5,-1.5M555.9,261.2l-0.9,2.4M555.9,261.2l-2.9,0.2M555.9,261.2l-0.9,-1.9M553.9,262.0l-0.9,2.4M553.9,262.0l-2.9,0.2M553.9,262.0l-0.9,-1.9M551.9,262.9l-0.8,2.5M551.9,262.9l-2.8,0.3M551.9,262.9l-1.0,-1.9M549.9,263.7l-0.7,2.5M549.9,263.7l-2.8,0.4M549.9,263.7l-1.0,-1.9M547.9,264.5l-0.7,2.5M547.9,264.5l-2.8,0.5M547.9,264.5l-1.1,-1.8M545.8,265.3l-0.6,2.5M545.8,265.3l-2.8,0.6M545.8,265.3l-1.1,-1.8M543.8,266.1l-0.5,2.6M543.8,266.1l-2.8,0.7M543.8,266.1l-1.2,-1.8M553.6,267.1l-1.2,2.3M553.6,267.1l-2.9,-0.1M553.6,267.1l-0.6,-2.0M551.8,267.8l-1.1,2.3M551.8,267.8l-2.9,-0.0M551.8,267.8l-0.7,-2.0M550.0,268.5l-1.0,2.4M550.0,268.5l-2.9,0.1M550.0,268.5l-0.8,-2.0M548.2,269.1l-0.9,2.4M548.2,269.1l-2.9,0.2M548.2,269.1l-0.9,-1.9M546.5,269.8l-0.8,2.5M546.5,269.8l-2.8,0.3M546.5,269.8l-0.9,-1.9M544.7,270.5l-0.7,2.5M544.7,270.5l-2.8,0.5M544.7,270.5l-1.0,-1.9M542.9,271.1l-0.6,2.5M542.9,271.1l-2.8,0.6M542.9,271.1l-1.1,-1.8M550.7,272.7l-1.4,2.2M550.7,272.7l-2.8,-0.4M550.7,272.7l-0.4,-2.1M549.2,273.3l-1.4,2.2M549.2,273.3l-2.8,-0.4M549.2,273.3l-0.5,-2.1M547.7,273.8l-1.3,2.2M547.7,273.8l-2.9,-0.3M547.7,273.8l-0.5,-2.1M546.2,274.4l-1.2,2.3M546.2,274.4l-2.9,-0.2M546.2,274.4l-0.6,-2.0M544.7,275.0l-1.2,2.3M544.7,275.0l-2.9,-0.1M544.7,275.0l-0.7,-2.0M543.2,275.5l-1.1,2.4M543.2,275.5l-2.9,0.0M543.2,275.5l-0.7,-2.0M541.8,276.1l-1.0,2.4M541.8,276.1l-2.9,0.1M541.8,276.1l-0.8,-2.0M547.2,278.0l-1.3,2.2M547.2,278.0l-2.8,-0.3M547.2,278.0l-0.5,-2.1M546.0,278.5l-1.3,2.3M546.0,278.5l-2.9,-0.2M546.0,278.5l-0.6,-2.0M544.7,279.0l-1.2,2.3M544.7,279.0l-2.9,-0.2M544.7,279.0l-0.6,-2.0M543.5,279.4l-1.2,2.3M543.5,279.4l-2.9,-0.1M543.5,279.4l-0.7,-2.0M542.3,279.9l-1.1,2.4M542.3,279.9l-2.9,-0.0M542.3,279.9l-0.7,-2.0M541.1,280.3l-1.0,2.4M541.1,280.3l-2.9,0.1M541.1,280.3l-0.8,-2.0M539.8,280.8l-1.0,2.4M539.8,280.8l-2.9,0.1M539.8,280.8l-0.8,-1.9M544.0,283.5l-1.4,2.2M544.0,283.5l-2.8,-0.3M544.0,283.5l-0.5,-2.1M543.0,283.9l-1.3,2.2M543.0,283.9l-2.8,-0.3M543.0,283.9l-0.5,-2.1M542.0,284.2l-1.3,2.3M542.0,284.2l-2.9,-0.2M542.0,284.2l-0.6,-2.0M540.9,284.5l-1.2,2.3M540.9,284.5l-2.9,-0.1M540.9,284.5l-0.6,-2.0M539.9,284.9l-1.1,2.3M539.9,284.9l-2.9,-0.1M539.9,284.9l-0.7,-2.0M538.9,285.2l-1.1,2.4M538.9,285.2l-2.9,0.0M538.9,285.2l-0.7,-2.0M537.9,285.5l-1.0,2.4M537.9,285.5l-2.9,0.1M537.9,285.5l-0.8,-2.0M540.6,288.9l-1.4,2.2M540.6,288.9l-2.8,-0.4M540.6,288.9l-0.4,-2.1M539.8,289.1l-1.4,2.2M539.8,289.1l-2.8,-0.4M539.8,289.1l-0.5,-2.1M539.1,289.4l-1.3,2.2M539.1,289.4l-2.8,-0.3M539.1,289.4l-0.5,-2.1M538.3,289.6l-1.3,2.3M538.3,289.6l-2.9,-0.2M538.3,289.6l-0.6,-2.0M537.5,289.8l-1.2,2.3M537.5,289.8l-2.9,-0.1M537.5,289.8l-0.7,-2.0M536.7,290.0l-1.1,2.4M536.7,290.0l-2.9,-0.0M536.7,290.0l-0.7,-2.0M536.0,290.3l-1.0,2.4M536.0,290.3l-2.9,0.1M536.0,290.3l-0.8,-2.0M537.1,294.2l-1.6,2.0M537.1,294.2l-2.8,-0.7M537.1,294.2l-0.2,-2.1M536.6,294.3l-1.6,2.1M536.6,294.3l-2.8,-0.6M536.6,294.3l-0.3,-2.1M536.1,294.5l-1.5,2.1M536.1,294.5l-2.8,-0.6M536.1,294.5l-0.3,-2.1M535.5,294.6l-1.5,2.1M535.5,294.6l-2.8,-0.5M535.5,294.6l-0.4,-2.1M535.0,294.7l-1.4,2.2M535.0,294.7l-2.8,-0.4M535.0,294.7l-0.4,-2.1M534.5,294.8l-1.4,2.2M534.5,294.8l-2.8,-0.3M534.5,294.8l-0.5,-2.1M534.0,295.0l-1.3,2.3M534.0,295.0l-2.9,-0.3M534.0,295.0l-0.6,-2.0M533.2,299.2l-1.8,1.9M533.2,299.2l-2.7,-0.9M533.2,299.2l-0.0,-2.1M532.9,299.2l-1.7,1.9M532.9,299.2l-2.7,-0.9M532.9,299.2l-0.1,-2.1M532.6,299.3l-1.7,2.0M532.6,299.3l-2.8,-0.8M532.6,299.3l-0.2,-2.1M532.3,299.3l-1.6,2.0M532.3,299.3l-2.8,-0.7M532.3,299.3l-0.2,-2.1M532.0,299.3l-1.5,2.1M532.0,299.3l-2.8,-0.6M532.0,299.3l-0.3,-2.1M531.7,299.4l-1.5,2.2M531.7,299.4l-2.8,-0.5M531.7,299.4l-0.4,-2.1M531.4,299.4l-1.4,2.2M531.4,299.4l-2.8,-0.3M531.4,299.4l-0.5,-2.1" fill="none" stroke="#625e5e" stroke-width="1" shape-rendering="crispEdges"/>
<path d="M461.7,204.5l-1.7,3.1l-2.6,-1.4M457.8,207.0l-1.6,3.1l-2.7,-1.4M453.9,209.4l-1.6,3.1l-2.7,-1.3M465.9,206.8l-1.7,3.1l-2.6,-1.4M461.8,209.1l-1.6,3.1l-2.7,-1.4M457.8,211.4l-1.6,3.1l-2.7,-1.3M470.0,209.0l-2.2,2.8l-2.4,-1.9M465.9,211.2l-1.9,2.9l-2.5,-1.6M461.7,213.3l-1.6,3.1l-2.7,-1.4M473.8,212.0l-2.2,2.8l-2.4,-1.9M469.6,213.7l-2.1,2.8l-2.4,-1.8M465.5,215.3l-2.0,2.9l-2.5,-1.7M477.5,214.9l-2.2,2.8l-2.4,-1.9M473.3,216.3l-2.1,2.8l-2.4,-1.8M469.1,217.8l-2.0,2.9l-2.5,-1.7M481.2,217.8l-2.1,2.8l-2.4,-1.8M477.0,219.0l-2.0,2.9l-2.5,-1.7M472.7,220.2l-2.0,2.9l-2.5,-1.7M485.1,220.6l-1.7,3.1l-2.6,-1.5M480.7,221.6l-2.1,2.8l-2.4,-1.8M476.3,222.7l-2.5,2.5l-2.1,-2.1M489.2,222.9l-1.7,3.1l-2.6,-1.5M484.3,224.3l-2.2,2.7l-2.3,-1.9M479.4,225.7l-2.7,2.2l-1.9,-2.3M493.3,225.3l-1.7,3.1l-2.6,-1.5M487.7,227.2l-2.2,2.7l-2.3,-1.9M482.2,229.1l-2.7,2.2l-1.9,-2.3M497.5,227.6l-1.6,3.1l-2.7,-1.4M491.2,230.0l-1.8,3.0l-2.6,-1.5M484.9,232.4l-2.0,2.9l-2.5,-1.7M501.7,229.8l-1.5,3.2l-2.7,-1.3M495.1,232.3l-1.7,3.0l-2.6,-1.5M488.5,234.9l-2.0,2.9l-2.5,-1.7M506.0,231.8l-1.5,3.2l-2.7,-1.3M499.0,234.6l-1.7,3.0l-2.6,-1.5M492.1,237.4l-2.0,2.9l-2.5,-1.7M510.3,233.8l-1.5,3.2l-2.7,-1.3M503.0,236.8l-2.0,2.9l-2.4,-1.7M495.7,239.8l-2.5,2.4l-2.1,-2.2M514.6,235.8l-1.9,3.0l-2.5,-1.6M506.6,239.4l-2.2,2.7l-2.3,-1.9M498.7,243.0l-2.6,2.4l-2.0,-2.2M518.6,238.3l-1.9,2.9l-2.5,-1.6M510.1,242.3l-2.3,2.7l-2.3,-1.9M501.6,246.2l-2.6,2.4l-2.0,-2.2M522.6,240.9l-2.1,2.8l-2.4,-1.8M513.6,245.2l-2.3,2.6l-2.3,-2.0M504.6,249.4l-2.5,2.5l-2.1,-2.1M526.3,243.8l-2.5,2.5l-2.1,-2.1M517.0,248.1l-2.4,2.5l-2.2,-2.1M507.7,252.5l-2.3,2.6l-2.2,-2.0M529.7,247.2l-2.5,2.5l-2.1,-2.1M520.3,251.3l-2.4,2.5l-2.2,-2.1M510.9,255.4l-2.3,2.6l-2.2,-2.0M533.0,250.5l-2.9,2.0l-1.7,-2.5M523.6,254.4l-3.0,1.8l-1.5,-2.6M514.2,258.3l-3.1,1.5l-1.3,-2.7M535.7,254.3l-3.3,1.2l-1.0,-2.8M525.8,258.2l-3.3,1.2l-1.0,-2.8M516.0,262.1l-3.3,1.1l-0.9,-2.8M537.3,258.8l-3.3,1.2l-1.0,-2.8M527.4,262.5l-3.4,0.9l-0.7,-2.9M517.4,266.2l-3.5,0.4l-0.4,-3.0M539.0,263.2l-3.4,0.6l-0.5,-2.9M528.4,266.8l-3.5,0.3l-0.2,-3.0M517.9,270.5l-3.5,-0.1l0.1,-3.0M539.8,267.8l-3.5,-0.4l0.3,-3.0M528.8,271.3l-3.5,-0.2l0.2,-3.0M517.8,274.8l-3.5,-0.1l0.1,-3.0M539.3,272.5l-3.5,-0.4l0.3,-3.0M528.5,275.8l-3.5,-0.2l0.2,-3.0M517.7,279.2l-3.5,-0.1l0.1,-3.0M538.8,277.2l-3.3,-1.0l0.9,-2.9M528.2,280.3l-3.5,-0.5l0.4,-3.0M517.6,283.5l-3.5,0.1l-0.1,-3.0M537.4,281.7l-3.3,-1.1l0.9,-2.9M527.6,284.8l-3.5,-0.1l0.1,-3.0M517.7,287.8l-3.4,1.0l-0.8,-2.9M535.9,286.2l-3.3,-1.1l0.9,-2.8M527.4,289.1l-3.5,-0.1l0.1,-3.0M518.9,292.0l-3.4,1.0l-0.8,-2.9M534.4,290.7l-3.3,-1.1l1.0,-2.8M527.3,293.5l-3.5,-0.1l0.1,-3.0M520.1,296.2l-3.4,1.0l-0.8,-2.9M532.9,295.2l-3.1,-1.5l1.3,-2.7M527.1,297.8l-3.4,0.6l-0.5,-3.0M521.3,300.4l-1.9,2.9l-2.5,-1.7M530.8,299.5l-3.1,-1.5l1.3,-2.7M527.7,301.0l-3.3,1.3l-1.1,-2.8M524.6,302.5l-1.0,3.4l-2.9,-0.8" fill="none" stroke="#5a5656" stroke-width="0.8"/></g>
</g>

<g shape-rendering="crispEdges" fill="none" stroke-width="1">
<line x1="260.5" y1="176.5" x2="382.5" y2="225.5" stroke="#00ff00"/>
<line x1="382.5" y1="225.5" x2="482.5" y2="201.5" stroke="#ff0000"/>
<line x1="382.5" y1="225.5" x2="338.5" y2="348.5" stroke="#0000ff"/>
</g>
<g shape-rendering="crispEdges" fill="none" stroke="#00ffff" stroke-width="1">
<polygon points="94.5,61.5 254.5,60.5 255.5,183.5 95.5,184.5" />
<polygon points="94.5,64.5 254.5,63.5 255.5,186.5 95.5,187.5" />
<polygon points="95.5,163.5 257.5,163.5 258.5,287.5 96.5,288.5" />
<polygon points="95.5,166.5 257.5,166.5 258.5,291.5 96.5,291.5" />
<polygon points="97.5,269.5 257.5,269.5 257.5,392.5 97.5,392.5" />
<polygon points="227.5,57.5 390.5,55.5 359.5,188.5 234.5,180.5" />
<polygon points="232.5,57.5 394.5,55.5 361.5,189.5 237.5,183.5" />
<polygon points="237.5,161.5 358.5,166.5 362.5,283.0 239.5,292.5" />
<polygon points="244.5,161.5 359.5,168.5 362.0,280.5 241.5,290.5" />
<polygon points="238.5,268.5 357.5,263.5 400.5,391.5 238.5,393.5" />
<polygon points="238.5,270.5 358.5,265.5 401.5,393.5 238.5,397.5" />
<polygon points="367.5,56.5 525.5,52.5 448.5,174.5 324.5,181.5" />
<polygon points="368.5,59.5 526.5,54.5 450.5,176.5 325.5,183.5" />
<polygon points="330.5,163.5 454.5,160.5 464.5,275.0 332.5,282.5" />
<polygon points="330.5,166.5 455.5,163.5 466.5,278.5 333.5,285.5" />
<polygon points="334.5,264.5 462.5,259.5 530.5,390.5 375.5,393.5" />
<polygon points="332.0,267.5 463.0,258.5 534.5,390.5 371.0,394.0" />
<polygon points="412.0,61.5 554.5,55.5 559.5,168.5 416.0,175.0" />
<polygon points="414.5,61.5 551.5,55.5 556.5,168.5 419.5,173.5" />
<polygon points="418.5,152.5 658.5,147.5 662.5,272.5 423.5,265.5" />
<polygon points="417.5,154.5 658.5,150.5 662.5,276.5 424.5,270.5" />
<polygon points="413.5,245.5 553.5,238.5 556.5,351.5 416.5,359.5" />
<polygon points="415.5,249.5 553.5,241.5 556.5,355.5 416.5,362.5" />
</g>
<g shape-rendering="crispEdges" fill="none" stroke-width="1">
<polygon points="92.5,269.5 253.5,269.5 253.5,392.5 92.5,392.5" stroke="#ff00ff"/>
<polyline points="92.5,269.5 253.5,269.5 253.5,392.5" stroke="#ffff00" stroke-dasharray="4 4" stroke-dashoffset="4.5"/>
<polyline points="92.5,269.5 92.5,392.5 253.5,392.5" stroke="#ffff00" stroke-dasharray="4 4" stroke-dashoffset="4.5"/>
</g>
<g shape-rendering="crispEdges">
<rect x="481.00" y="15" width="13.63" height="19" fill="rgb(0,0,0)"/>
<rect x="494.33" y="15" width="13.63" height="19" fill="rgb(15,15,15)"/>
<rect x="507.67" y="15" width="13.63" height="19" fill="rgb(30,30,30)"/>
<rect x="521.00" y="15" width="13.63" height="19" fill="rgb(45,45,45)"/>
<rect x="534.33" y="15" width="13.63" height="19" fill="rgb(60,60,60)"/>
<rect x="547.67" y="15" width="13.63" height="19" fill="rgb(75,75,75)"/>
<rect x="561.00" y="15" width="13.63" height="19" fill="rgb(90,90,90)"/>
<rect x="574.33" y="15" width="13.63" height="19" fill="rgb(105,105,105)"/>
<rect x="587.67" y="15" width="13.63" height="19" fill="rgb(120,120,120)"/>
<rect x="601.00" y="15" width="13.63" height="19" fill="rgb(135,135,135)"/>
<rect x="614.33" y="15" width="13.63" height="19" fill="rgb(150,150,150)"/>
<rect x="627.67" y="15" width="13.63" height="19" fill="rgb(165,165,165)"/>
<rect x="641.00" y="15" width="13.63" height="19" fill="rgb(180,180,180)"/>
<rect x="654.33" y="15" width="13.63" height="19" fill="rgb(195,195,195)"/>
<rect x="667.67" y="15" width="13.63" height="19" fill="rgb(210,210,210)"/>
<rect x="681.00" y="15" width="13.63" height="19" fill="rgb(225,225,225)"/>
<rect x="694.33" y="15" width="13.63" height="19" fill="rgb(240,240,240)"/>
<rect x="707.67" y="15" width="13.63" height="19" fill="rgb(255,255,255)"/>
<rect x="480" y="12" width="1" height="24" fill="#fff"/>
<rect x="721" y="12" width="1" height="24" fill="#fff"/>
<rect x="528" y="34" width="1" height="3" fill="#fff"/>
<rect x="576" y="34" width="1" height="3" fill="#fff"/>
<rect x="624" y="34" width="1" height="3" fill="#fff"/>
<rect x="672" y="34" width="1" height="3" fill="#fff"/>
</g>
<defs><filter id="idf" x="0" y="0" width="723" height="631" filterUnits="userSpaceOnUse"><feOffset dx="0" dy="0"/></filter></defs><g filter="url(#idf)">
<text x="480" y="12" font-size="13.6" textLength="6" lengthAdjust="spacingAndGlyphs" xml:space="preserve" style="white-space:pre">0</text>
<text x="714" y="12" font-size="13.6" textLength="6" lengthAdjust="spacingAndGlyphs" xml:space="preserve" style="white-space:pre">1</text>
<text x="528" y="48" font-size="13.6" textLength="18" lengthAdjust="spacingAndGlyphs" xml:space="preserve" style="white-space:pre">0.2</text>
<text x="576" y="48" font-size="13.6" textLength="18" lengthAdjust="spacingAndGlyphs" xml:space="preserve" style="white-space:pre">0.4</text>
<text x="624" y="48" font-size="13.6" textLength="18" lengthAdjust="spacingAndGlyphs" xml:space="preserve" style="white-space:pre">0.6</text>
<text x="672" y="48" font-size="13.6" textLength="18" lengthAdjust="spacingAndGlyphs" xml:space="preserve" style="white-space:pre">0.8</text>
<g shape-rendering="crispEdges">
<rect x="0" y="399" width="81" height="16" fill="#fff"/>
<rect x="1" y="400" width="15" height="7" fill="#000"/>
<rect x="32" y="400" width="16" height="7" fill="#000"/>
<rect x="64" y="400" width="16" height="7" fill="#000"/>
<rect x="16" y="407" width="16" height="7" fill="#000"/>
<rect x="48" y="407" width="16" height="7" fill="#000"/>
</g>
<text x="28" y="397" font-size="13.6" textLength="24" lengthAdjust="spacingAndGlyphs" xml:space="preserve" style="white-space:pre">5 km</text>
<text x="88" y="413" font-size="13.6" textLength="486" lengthAdjust="spacingAndGlyphs" xml:space="preserve" style="white-space:pre">MSI:  2000-319T18:16:40.00 to 2000-319T18:28:04.00 (6/0149636034 to 6/0149636718)</text>
<text x="7" y="436" font-size="13.6" textLength="132" lengthAdjust="spacingAndGlyphs" xml:space="preserve" style="white-space:pre">MSI_EquatGlobals319_11</text>
<text x="7" y="450" font-size="13.6" textLength="192" lengthAdjust="spacingAndGlyphs" xml:space="preserve" style="white-space:pre"> 4x3_3 mosaic in filter 4, clean</text>
</g>
</svg></body></html>
